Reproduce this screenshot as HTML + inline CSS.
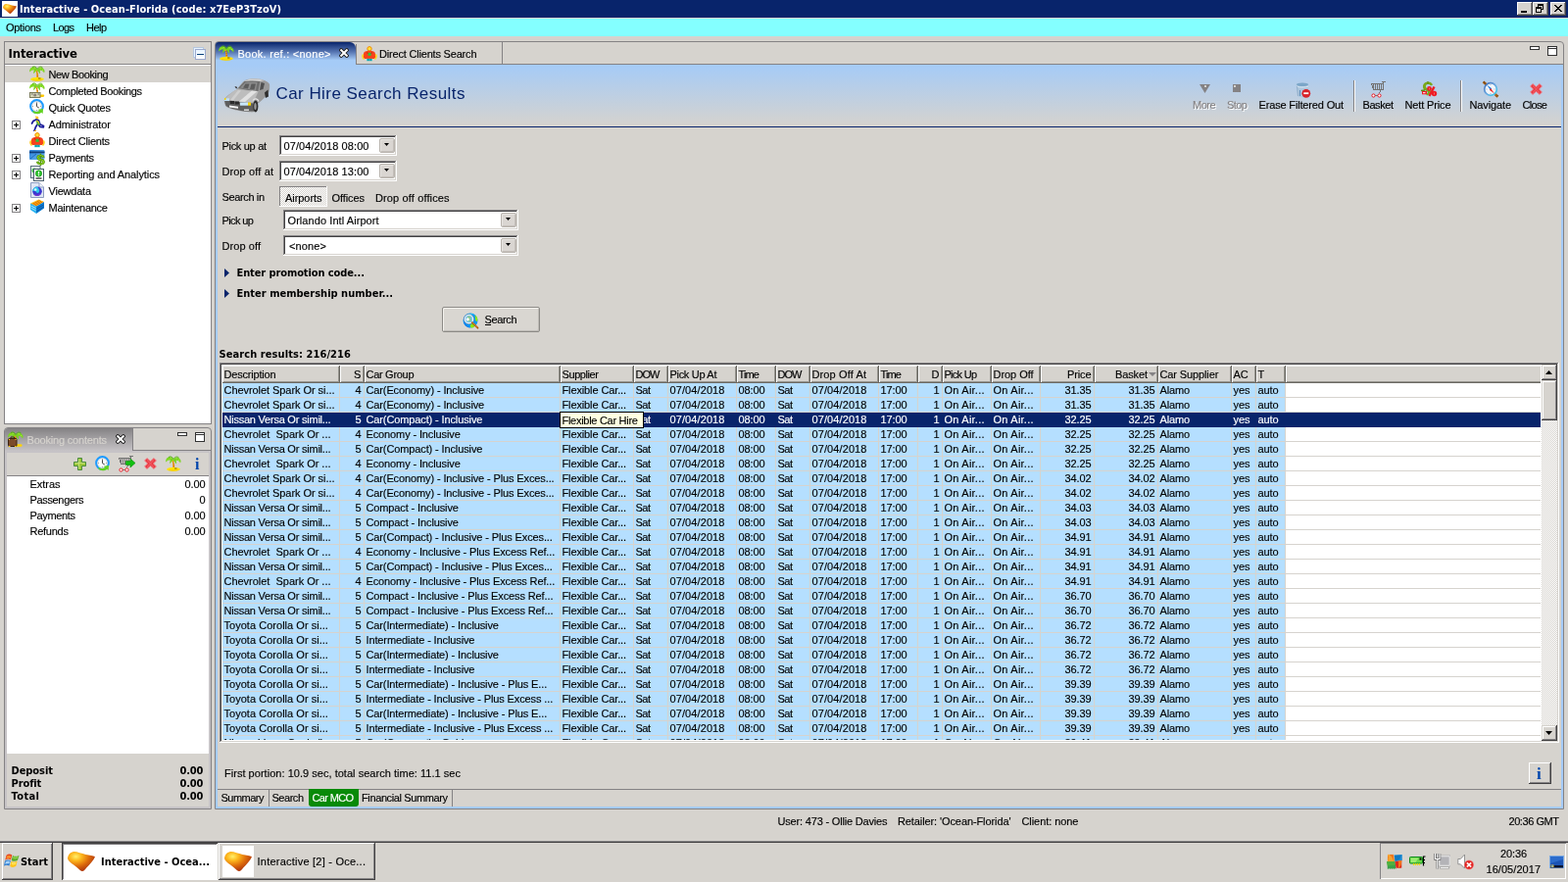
<!DOCTYPE html>
<html lang="en"><head><meta charset="utf-8"><title>Interactive - Ocean-Florida</title><style>html,body{margin:0;padding:0}body{width:1600px;height:900px;overflow:hidden;background:#D6D3CE;position:relative;font:11px/13px "Liberation Sans",sans-serif;color:#000}
#root{left:0;top:0;width:1600px;height:900px;will-change:transform}div,span,svg{position:absolute;display:block}span{white-space:pre}
.t{font:11px/13px "Liberation Sans",sans-serif;-webkit-text-stroke:.15px}.b{font:bold 11px/13px "DejaVu Sans Condensed","Liberation Sans",sans-serif}.h{font:bold 13px/15px "DejaVu Sans Condensed","Liberation Sans",sans-serif}.T{font:17px/20px "Liberation Sans",sans-serif}</style></head><body><div id="root">
<div style="left:0px;top:0px;width:1600px;height:18px;background:#08246B;"></div>
<div style="left:2px;top:1px;width:16px;height:16px;background:#fff;"></div>
<svg style="left:3px;top:4px" width="14" height="10" viewBox="0 0 28 20"><defs><radialGradient id="hg1" cx=".3" cy=".25" r=".85"><stop offset="0" stop-color="#fff06a"/><stop offset=".25" stop-color="#fdb81e"/><stop offset=".55" stop-color="#e0700c"/><stop offset=".85" stop-color="#b43c0c"/></radialGradient></defs><path d="M0 7C.5 3 3 .3 6.500 0c3.500 0 8 2 12 3 4 1 7.500 1.200 9.500 2.200-1.500 3.500-5 7.500-9 11.500-1.300 1.500-2.500 3.300-4 3.300s-3-1.500-4.500-3C7 13.500 1 11 0 7z" fill="url(#hg1)"/></svg>
<span class="b" style="left:20px;top:3px;letter-spacing:0.07px;color:#fff;">Interactive - Ocean-Florida (code: x7EeP3TzoV)</span>
<div style="left:1548px;top:2px;width:16px;height:14px;background:#D6D3CE;box-shadow:inset -1px -1px #424142,inset 1px 1px #fff,inset -2px -2px #848284,inset 2px 2px #D6D3CE;"></div>
<div style="left:1564px;top:2px;width:16px;height:14px;background:#D6D3CE;box-shadow:inset -1px -1px #424142,inset 1px 1px #fff,inset -2px -2px #848284,inset 2px 2px #D6D3CE;"></div>
<div style="left:1582px;top:2px;width:16px;height:14px;background:#D6D3CE;box-shadow:inset -1px -1px #424142,inset 1px 1px #fff,inset -2px -2px #848284,inset 2px 2px #D6D3CE;"></div>
<div style="left:1552px;top:11px;width:6px;height:2px;background:#000;"></div>
<div style="left:1569px;top:4px;width:6px;height:6px;border:1px solid #000;border-top-width:2px;box-sizing:border-box"></div>
<div style="left:1567px;top:7px;width:6px;height:6px;background:#D6D3CE;border:1px solid #000;border-top-width:2px;box-sizing:border-box"></div>
<svg style="left:1586px;top:5px" width="8" height="7" viewBox="0 0 8 7"><path d="M0 0l7 7M1 0l7 7M7 0L0 7M8 0L1 7" stroke="#000" stroke-width="1"/></svg>
<div style="left:0px;top:19px;width:1600px;height:18px;background:#84FFFF;"></div>
<span class="t" style="left:6px;top:22px;letter-spacing:-0.32px;">Options</span>
<span class="t" style="left:54px;top:22px;letter-spacing:-0.62px;">Logs</span>
<span class="t" style="left:88px;top:22px;letter-spacing:-0.54px;">Help</span>
<div style="left:4px;top:42px;width:212px;height:391px;border:1px solid #848284;box-sizing:border-box"></div>
<div style="left:5px;top:65px;width:210px;height:1px;background:#848284;"></div>
<div style="left:5px;top:66px;width:210px;height:366px;background:#fff;"></div>
<div style="left:5px;top:67px;width:210px;height:17px;background:#D6D3CE;"></div>
<span class="h" style="left:8.5px;top:47px;letter-spacing:-0.15px;">Interactive</span>
<div style="left:197px;top:48px;width:11px;height:11px;background:#E7F3FF;border:1px solid #B5C7DE;box-sizing:border-box"></div>
<div style="left:199px;top:50px;width:11px;height:11px;background:#fff;border:1px solid #9CAACE;box-sizing:border-box;background:linear-gradient(#E7F3FF,#fff)"></div>
<div style="left:201px;top:55px;width:7px;height:1px;background:#08417B;"></div>
<svg style="left:30px;top:67px" width="16" height="16" viewBox="0 0 16 16"><path d="M8 4.200C6.500 .8 3 .2 .8 3.200 0 4.500 0 5.800 .6 6.600 1.500 4.800 3.200 4.200 5 4.800 4.200 5.800 4 7.200 4.600 8.300 5.200 6.800 6.300 5.600 7.800 5.200 9.200 5.700 10 7 10.200 8.600 11.300 7.400 11.300 6 10.600 4.900 12.300 4.400 14 5.400 15 7.600 16 6 15.600 4.200 14.200 3 12.300 1.200 9.800 1 8 4.200z" fill="#79d41d"/><path d="M3 1.500C5 .3 6.800 1.200 8 3.500 9.500 1 11.800 .4 13.500 2" fill="none" stroke="#4fae0c" stroke-width=".9"/><path d="M2 4.500l1-1M4.500 3l1.200-.6M10.500 2.600l1.300.4M13 4l1 1.200M6.500 6l.8-.8" stroke="#b6f04a" stroke-width=".8"/><path d="M7.400 4.500C8.600 7 9.200 9.500 9.200 13h-1.900C7.500 10 7.400 7 6.600 5z" fill="#f4a300"/><path d="M7.300 6.500l1.200-.4M7.600 8.500l1.300-.3M7.600 10.500l1.500-.2" stroke="#b8400a" stroke-width=".7"/><path d="M1.200 14c0-1.100 3-1.900 6.800-1.900s6.800.8 6.800 1.700c0 1-2.400 1.900-6.400 1.900-4.500 0-7.200-.7-7.200-1.700z" fill="#ffe400"/><path d="M3 14.600c3 .7 7 .7 10.500-.2" stroke="#f2c200" stroke-width=".8" fill="none"/><path d="M9 13h2.500" stroke="#6b4a00" stroke-width=".8"/></svg>
<span class="t" style="left:49.5px;top:70px;letter-spacing:-0.38px;">New Booking</span>
<svg style="left:30px;top:84px" width="16" height="16" viewBox="0 0 16 16"><path d="M8 4.200C6.500 .8 3 .2 .8 3.200 0 4.500 0 5.800 .6 6.600 1.500 4.800 3.200 4.200 5 4.800 4.200 5.800 4 7.200 4.600 8.300 5.200 6.800 6.300 5.600 7.800 5.200 9.200 5.700 10 7 10.200 8.600 11.300 7.400 11.300 6 10.600 4.900 12.300 4.400 14 5.400 15 7.600 16 6 15.600 4.200 14.200 3 12.300 1.200 9.800 1 8 4.200z" fill="#79d41d"/><path d="M3 1.500C5 .3 6.800 1.200 8 3.500 9.500 1 11.800 .4 13.500 2" fill="none" stroke="#4fae0c" stroke-width=".9"/><path d="M2 4.500l1-1M4.500 3l1.200-.6M10.500 2.600l1.300.4M13 4l1 1.200M6.500 6l.8-.8" stroke="#b6f04a" stroke-width=".8"/><path d="M7.400 4.500C8.600 7 9.200 9.500 9.200 13h-1.900C7.500 10 7.400 7 6.600 5z" fill="#f4a300"/><path d="M7.300 6.500l1.200-.4M7.600 8.500l1.300-.3M7.600 10.500l1.500-.2" stroke="#b8400a" stroke-width=".7"/><path d="M11 12.500h3.500c1 0 1 2.500-.5 2.500h-3z" fill="#ffc800"/><rect x=".5" y="10.500" width="10.500" height="5" fill="#d6d6b8" stroke="#7b7b5a" stroke-width="1"/><circle cx="5.700" cy="13" r="1.600" fill="#8a8378"/><path d="M2 12h1.500M8.500 12H10" stroke="#555" stroke-width=".9"/></svg>
<span class="t" style="left:49.5px;top:87px;letter-spacing:-0.35px;">Completed Bookings</span>
<svg style="left:30px;top:101px" width="16" height="16" viewBox="0 0 16 16"><circle cx="7.500" cy="7.500" r="6.300" fill="#fff" stroke="#1e9bff" stroke-width="2.200"/><circle cx="7.500" cy="7.500" r="4.800" fill="#fdfdfd" stroke="#c9c9c9" stroke-width=".7"/><path d="M7.500 4.200v3.500l2.300 1.300" stroke="#444" stroke-width="1" fill="none"/><path d="M7.500 3v.8M12 7.500h-.8M3 7.500h.8M7.500 12v-.8" stroke="#777" stroke-width=".8"/><path d="M3.500 11.500c1.500 1.600 4.200 2 6.500 .8l-1-1.600 5 -.7-.3 5-1.500-1.300C9 16 5.500 15.500 3.500 13.500z" fill="#63d321"/></svg>
<span class="t" style="left:49.5px;top:104px;letter-spacing:-0.29px;">Quick Quotes</span>
<svg style="left:30px;top:118px" width="16" height="16" viewBox="0 0 16 16"><path d="M6 .5l3 .5 .5 2.500-2.500.5z" fill="#ffc21a"/><path d="M7 4l2.500 1 1.500 4 3.500 1.500M8.500 8.500l-2 3 -1.500 4M7 4L4 5.500 2.500 8M9 9l2 2.500 3.500.3" stroke="#1a1a9c" stroke-width="1.700" fill="none" stroke-linecap="round"/><path d="M6.500 4.500l3.500 1.200 1.200 3.800-3 .5z" fill="#4cab3c"/><path d="M7 5l2 .8.700 2.500" stroke="#ffc21a" stroke-width=".9" fill="none"/><path d="M5 15.500h2" stroke="#f4a300" stroke-width="1"/></svg>
<span class="t" style="left:49.5px;top:121px;letter-spacing:-0.11px;">Administrator</span>
<div style="left:12px;top:123px;width:9px;height:9px;background:#fff;border:1px solid #848284;box-sizing:border-box"></div>
<div style="left:14px;top:127px;width:5px;height:1px;background:#000;"></div>
<div style="left:16px;top:125px;width:1px;height:5px;background:#000;"></div>
<svg style="left:30px;top:135px" width="16" height="16" viewBox="0 0 16 16"><circle cx="8" cy="2.800" r="2.200" fill="#ffe23a" stroke="#f08a00" stroke-width="1"/><path d="M2 8.500C2 5.500 4.500 4.800 8 4.800s6 .7 6 3.700l1 3-2.200 1.500H3.200L1 11.500z" fill="#f8421a"/><path d="M1.700 8.500c-1 1.500-.8 3.500.8 5M14.300 8.500c1 1.500.8 3.500-.8 5" stroke="#ffd21a" stroke-width="1.600" fill="none"/><rect x="5.200" y="12.800" width="5.600" height="2.400" fill="#22c8c8"/><path d="M6.500 13v2M8 13v2M9.500 13v2" stroke="#0a7a9a" stroke-width=".6"/><rect x="6.500" y="6.800" width="3.200" height="3" fill="#2ec43a"/><path d="M5 6.500l1.500 1M11 6.500l-1.500 1" stroke="#b8200a" stroke-width=".8"/></svg>
<span class="t" style="left:49.5px;top:138px;letter-spacing:-0.22px;">Direct Clients</span>
<svg style="left:30px;top:152px" width="17" height="17" viewBox="0 0 17 17"><defs><linearGradient id="pg182" x1="0" x2="1" y1="0" y2="1"><stop offset="0" stop-color="#2a7fd8"/><stop offset="1" stop-color="#6ab6f0"/></linearGradient></defs><rect x="0" y="1" width="15.500" height="10" rx="1" fill="url(#pg182)"/><rect x="0" y="2.500" width="15.500" height="1.800" fill="#0f3c78"/><path d="M1 10l6-5" stroke="#1560b0" stroke-width=".8"/><text x="11.500" y="15.500" font-size="15" font-weight="bold" font-family="Liberation Sans,sans-serif" text-anchor="middle" fill="#8ed81c" stroke="#4d8c08" stroke-width=".7">$</text></svg>
<span class="t" style="left:49.5px;top:155px;letter-spacing:-0.35px;">Payments</span>
<div style="left:12px;top:157px;width:9px;height:9px;background:#fff;border:1px solid #848284;box-sizing:border-box"></div>
<div style="left:14px;top:161px;width:5px;height:1px;background:#000;"></div>
<div style="left:16px;top:159px;width:1px;height:5px;background:#000;"></div>
<svg style="left:30px;top:169px" width="16" height="16" viewBox="0 0 16 16"><rect x="1.500" y=".5" width="9.500" height="12" fill="#eef3f6" stroke="#5a6e7e"/><circle cx="5" cy="5" r="2.500" fill="#3cc43c"/><rect x="4.500" y="3.500" width="10" height="12" fill="#fff" stroke="#4a5e6e"/><circle cx="9.500" cy="8" r="3.200" fill="#2cc42c" stroke="#148a14" stroke-width=".6"/><path d="M9.500 6v2.500" stroke="#fff" stroke-width="1.200"/><circle cx="9.500" cy="9.800" r=".7" fill="#fff"/><path d="M6.500 13h6" stroke="#222" stroke-width="1.200"/></svg>
<span class="t" style="left:49.5px;top:172px;letter-spacing:-0.09px;">Reporting and Analytics</span>
<div style="left:12px;top:174px;width:9px;height:9px;background:#fff;border:1px solid #848284;box-sizing:border-box"></div>
<div style="left:14px;top:178px;width:5px;height:1px;background:#000;"></div>
<div style="left:16px;top:176px;width:1px;height:5px;background:#000;"></div>
<svg style="left:30px;top:186px" width="16" height="16" viewBox="0 0 16 16"><path d="M1.500 .5h8.500l4.500 4.500v10.500h-13z" fill="#dfe6f4" stroke="#8c9cc0"/><path d="M10 .5v4.500h4.500" fill="#f4f7fc" stroke="#8c9cc0"/><circle cx="8" cy="9.300" r="4.800" fill="#3a3ad0"/><path d="M8 4.500a4.800 4.800 0 0 0-4.800 4.800c1.500-1 3-.5 3.800.7 1 1.500 2.500 1 3-.5.400-1.500 0-3-2-5z" fill="#2ec8e8"/><circle cx="6.200" cy="7.500" r="1.300" fill="#d8f4ff"/><path d="M5 12.500c2 1.500 5 1 6.500-1" stroke="#8a2ad0" stroke-width="1" fill="none"/></svg>
<span class="t" style="left:49.5px;top:189px;letter-spacing:-0.22px;">Viewdata</span>
<svg style="left:30px;top:203px" width="16" height="16" viewBox="0 0 16 16"><path d="M1 4.500L9.500 .5 15 3 7 7.500z" fill="#ffc21a"/><path d="M2.500 5.500l8-4M4 6.300l8-4M5.500 7l8-4" stroke="#e06a00" stroke-width=".9"/><path d="M1 4.500l6 3V15L1 11z" fill="#2ab4f0"/><path d="M7 7.500L15 3v6.500L7 15z" fill="#0a7ad0"/><path d="M1.500 7l5 2.500M1.500 9.200l5 2.600" stroke="#bfeaff" stroke-width=".8"/><path d="M7.500 10l7-4M7.500 12.500l7-4.300" stroke="#0a4c9c" stroke-width=".8"/></svg>
<span class="t" style="left:49.5px;top:206px;letter-spacing:-0.25px;">Maintenance</span>
<div style="left:12px;top:208px;width:9px;height:9px;background:#fff;border:1px solid #848284;box-sizing:border-box"></div>
<div style="left:14px;top:212px;width:5px;height:1px;background:#000;"></div>
<div style="left:16px;top:210px;width:1px;height:5px;background:#000;"></div>
<div style="left:4px;top:436px;width:212px;height:390px;border:1px solid #848284;box-sizing:border-box;border-radius:4px 4px 0 0"></div>
<div style="left:5px;top:460px;width:210px;height:365px;border:2px solid #C6C3C6;border-top:0;box-sizing:border-box"></div>
<div style="left:5px;top:437px;width:131px;height:25px;background:linear-gradient(#848284,#C6C3C6 92%);border-radius:3px 0 0 0"></div>
<div style="left:136px;top:459px;width:79px;height:1px;background:#848284;"></div>
<div style="left:135px;top:438px;width:1px;height:22px;background:#848284;"></div>
<div style="left:136px;top:460px;width:79px;height:2px;background:#C6C3C6;"></div>
<svg style="left:8px;top:440px" width="16" height="16" viewBox="0 0 16 16"><path d="M8 4.200C6.500 .8 3 .2 .8 3.200 0 4.500 0 5.800 .6 6.600 1.500 4.800 3.200 4.200 5 4.800 4.200 5.800 4 7.200 4.600 8.300 5.200 6.800 6.300 5.600 7.800 5.200 9.200 5.700 10 7 10.200 8.600 11.300 7.400 11.300 6 10.600 4.900 12.300 4.400 14 5.400 15 7.600 16 6 15.600 4.200 14.200 3 12.300 1.200 9.800 1 8 4.200z" fill="#79d41d"/><path d="M3 1.500C5 .3 6.800 1.200 8 3.500 9.500 1 11.800 .4 13.500 2" fill="none" stroke="#4fae0c" stroke-width=".9"/><path d="M2 4.500l1-1M4.500 3l1.200-.6M10.500 2.600l1.300.4M13 4l1 1.200M6.500 6l.8-.8" stroke="#b6f04a" stroke-width=".8"/><path d="M7.400 4.500C8.600 7 9.200 9.500 9.200 13h-1.900C7.500 10 7.400 7 6.600 5z" fill="#f4a300"/><path d="M7.300 6.500l1.200-.4M7.600 8.500l1.300-.3M7.600 10.500l1.500-.2" stroke="#b8400a" stroke-width=".7"/><path d="M9 13.200h4.500c1.500 0 1.500 2.500 0 2.500H9z" fill="#ffd400"/><rect x=".5" y="7.500" width="8.500" height="8" rx="1" fill="#7b4b2a" stroke="#3d2412" stroke-width="1"/><path d="M3 7.500V6h3.500v1.500" fill="none" stroke="#3d2412" stroke-width="1"/><path d="M1 15.500h1.500M7 15.500h1.500M1 8.500h1M7.500 8.500h1" stroke="#ffd400" stroke-width="1"/></svg>
<span class="t" style="left:27.5px;top:443px;letter-spacing:-0.19px;color:#D6D3CE;">Booking contents</span>
<svg style="left:118px;top:443px" width="10" height="10" viewBox="0 0 10 10"><path d="M2.200 2.200l5.600 5.600M7.800 2.200l-5.600 5.600" stroke="#1c1c1c" stroke-width="3.800" stroke-linecap="square"/><path d="M2.200 2.200l5.600 5.600M7.800 2.200l-5.600 5.600" stroke="#fff" stroke-width="2" stroke-linecap="square"/></svg>
<div style="left:181px;top:441px;width:10px;height:4px;background:#fff;border:1px solid #333;box-sizing:border-box"></div>
<div style="left:199px;top:441px;width:10px;height:10px;background:#fff;border:1px solid #333;box-sizing:border-box"></div>
<div style="left:200px;top:443px;width:8px;height:1px;background:#333;"></div>
<svg style="left:75px;top:467px" width="13" height="13" viewBox="0 0 13 13"><path d="M4.500 .5h4v4h4v4h-4v4h-4v-4h-4v-4h4z" fill="#9dc83c" stroke="#4a8a3a"/><path d="M5.500 1.500v10M1.500 5.500h10" stroke="#c6e27a" stroke-width="1"/></svg>
<svg style="left:97px;top:465px" width="16" height="16" viewBox="0 0 16 16"><circle cx="7.500" cy="7.500" r="6.300" fill="#fff" stroke="#1e9bff" stroke-width="2.200"/><circle cx="7.500" cy="7.500" r="4.800" fill="#fdfdfd" stroke="#c9c9c9" stroke-width=".7"/><path d="M7.500 4.200v3.500l2.300 1.300" stroke="#444" stroke-width="1" fill="none"/><path d="M7.500 3v.8M12 7.500h-.8M3 7.500h.8M7.500 12v-.8" stroke="#777" stroke-width=".8"/><path d="M3.500 11.500c1.500 1.600 4.200 2 6.500 .8l-1-1.600 5 -.7-.3 5-1.500-1.300C9 16 5.500 15.500 3.500 13.500z" fill="#63d321"/></svg>
<svg style="left:121px;top:465px" width="17" height="17" viewBox="0 0 17 17"><g shape-rendering="crispEdges" stroke="#737373" fill="none"><path d="M0 2.500h13M11 .5h4M12.500 1v8M2 8.500h11M.5 3v1M1.500 4v3"/><path d="M2.500 3v5M4.500 3v5M6.500 3v5M8.500 3v5M10.500 3v5"/><path d="M9.500 9v2M8.500 11v1M4 14.500h3"/></g><circle cx="2.500" cy="14.500" r="1.600" fill="#fff" stroke="#e8101c" stroke-width="1"/><circle cx="8.500" cy="14.500" r="1.600" fill="#fff" stroke="#e8101c" stroke-width="1"/><path d="M7.500 5.500h4.500v-2.500l5 4.500-5 4.500V9.500H7.500z" fill="#10c010" stroke="#0a8a0a" stroke-width=".6"/></svg>
<svg style="left:147px;top:467px" width="13" height="12" viewBox="0 0 13 12"><path d="M3 .6L6.500 3.700 10 .6 12.400 3 9.400 6l3 3L10 11.400 6.500 8.300 3 11.400 .6 9l3-3-3-3z" fill="#e8353f" stroke="#f27c84" stroke-width=".9" stroke-linejoin="round"/><path d="M3 2.500l7 7M10 2.500l-7 7" stroke="#f0565e" stroke-width="1.200"/></svg>
<svg style="left:169px;top:465px" width="16" height="16" viewBox="0 0 16 16"><path d="M8 4.200C6.500 .8 3 .2 .8 3.200 0 4.500 0 5.800 .6 6.600 1.500 4.800 3.200 4.200 5 4.800 4.200 5.800 4 7.200 4.600 8.300 5.200 6.800 6.300 5.600 7.800 5.200 9.200 5.700 10 7 10.200 8.600 11.300 7.400 11.300 6 10.600 4.900 12.300 4.400 14 5.400 15 7.600 16 6 15.600 4.200 14.200 3 12.300 1.200 9.800 1 8 4.200z" fill="#79d41d"/><path d="M3 1.500C5 .3 6.800 1.200 8 3.500 9.500 1 11.800 .4 13.500 2" fill="none" stroke="#4fae0c" stroke-width=".9"/><path d="M2 4.500l1-1M4.500 3l1.200-.6M10.500 2.600l1.300.4M13 4l1 1.200M6.500 6l.8-.8" stroke="#b6f04a" stroke-width=".8"/><path d="M7.400 4.500C8.600 7 9.200 9.500 9.200 13h-1.900C7.500 10 7.400 7 6.600 5z" fill="#f4a300"/><path d="M7.300 6.500l1.200-.4M7.600 8.500l1.300-.3M7.600 10.500l1.500-.2" stroke="#b8400a" stroke-width=".7"/><path d="M1.200 14c0-1.100 3-1.900 6.800-1.900s6.800.8 6.800 1.700c0 1-2.400 1.900-6.400 1.900-4.500 0-7.200-.7-7.200-1.700z" fill="#ffe400"/><path d="M3 14.600c3 .7 7 .7 10.500-.2" stroke="#f2c200" stroke-width=".8" fill="none"/><path d="M9 13h2.500" stroke="#6b4a00" stroke-width=".8"/></svg>
<span style="left:199px;top:465px;font:bold 16px/18px 'Liberation Serif',serif;color:#0046ad">i</span>
<div style="left:7px;top:485px;width:206px;height:1px;background:#848284;"></div>
<div style="left:7px;top:486px;width:206px;height:283px;background:#fff;"></div>
<span class="t" style="left:30.5px;top:488px;letter-spacing:-0.04px;">Extras</span>
<span class="t" style="left:188.5px;top:488px;letter-spacing:-0.12px;">0.00</span>
<span class="t" style="left:30.5px;top:504px;letter-spacing:-0.34px;">Passengers</span>
<span class="t" style="left:203.5px;top:504px;">0</span>
<span class="t" style="left:30.5px;top:520px;letter-spacing:-0.35px;">Payments</span>
<span class="t" style="left:188.5px;top:520px;letter-spacing:-0.12px;">0.00</span>
<span class="t" style="left:30.5px;top:536px;letter-spacing:-0.25px;">Refunds</span>
<span class="t" style="left:188.5px;top:536px;letter-spacing:-0.12px;">0.00</span>
<span class="b" style="left:11.5px;top:780px;letter-spacing:-0.06px;">Deposit</span>
<span class="b" style="left:183.5px;top:780px;letter-spacing:-0.14px;">0.00</span>
<span class="b" style="left:11.5px;top:793px;letter-spacing:-0.1px;">Profit</span>
<span class="b" style="left:183.5px;top:793px;letter-spacing:-0.14px;">0.00</span>
<span class="b" style="left:11.5px;top:806px;letter-spacing:0.4px;">Total</span>
<span class="b" style="left:183.5px;top:806px;letter-spacing:-0.14px;">0.00</span>
<div style="left:219px;top:42px;width:1377px;height:784px;border:1px solid #848284;box-sizing:border-box;border-radius:4px 4px 0 0"></div>
<div style="left:220px;top:66px;width:1375px;height:759px;border:2px solid #A5CBF7;border-top:0;box-sizing:border-box"></div>
<div style="left:363px;top:65px;width:1232px;height:1px;background:#848284;"></div>
<div style="left:220px;top:43px;width:143px;height:23px;background:linear-gradient(#08246B 0,#5A79B5 45%,#A5CBF7 80%);border-radius:3px 6px 0 0"></div>
<svg style="left:223px;top:46px" width="16" height="16" viewBox="0 0 16 16"><path d="M8 4.200C6.500 .8 3 .2 .8 3.200 0 4.500 0 5.800 .6 6.600 1.500 4.800 3.200 4.200 5 4.800 4.200 5.800 4 7.200 4.600 8.300 5.200 6.800 6.300 5.600 7.800 5.200 9.200 5.700 10 7 10.200 8.600 11.300 7.400 11.300 6 10.600 4.900 12.300 4.400 14 5.400 15 7.600 16 6 15.600 4.200 14.200 3 12.300 1.200 9.800 1 8 4.200z" fill="#79d41d"/><path d="M3 1.500C5 .3 6.800 1.200 8 3.500 9.500 1 11.800 .4 13.500 2" fill="none" stroke="#4fae0c" stroke-width=".9"/><path d="M2 4.500l1-1M4.500 3l1.200-.6M10.500 2.600l1.300.4M13 4l1 1.200M6.500 6l.8-.8" stroke="#b6f04a" stroke-width=".8"/><path d="M7.400 4.500C8.600 7 9.200 9.500 9.200 13h-1.900C7.500 10 7.400 7 6.600 5z" fill="#f4a300"/><path d="M7.300 6.500l1.200-.4M7.600 8.500l1.300-.3M7.600 10.500l1.500-.2" stroke="#b8400a" stroke-width=".7"/><path d="M1.200 14c0-1.100 3-1.900 6.800-1.900s6.800.8 6.800 1.700c0 1-2.400 1.900-6.400 1.900-4.500 0-7.200-.7-7.200-1.700z" fill="#ffe400"/><path d="M3 14.600c3 .7 7 .7 10.500-.2" stroke="#f2c200" stroke-width=".8" fill="none"/><path d="M9 13h2.500" stroke="#6b4a00" stroke-width=".8"/></svg>
<span class="t" style="left:242.5px;top:49px;letter-spacing:0.26px;color:#fff;">Book. ref.: &lt;none&gt;</span>
<svg style="left:346px;top:49px" width="10" height="10" viewBox="0 0 10 10"><path d="M2.200 2.200l5.600 5.600M7.800 2.200l-5.600 5.600" stroke="#1c1c1c" stroke-width="3.800" stroke-linecap="square"/><path d="M2.200 2.200l5.600 5.600M7.800 2.200l-5.600 5.600" stroke="#fff" stroke-width="2" stroke-linecap="square"/></svg>
<div style="left:363px;top:45px;width:1px;height:20px;background:#848284;"></div>
<div style="left:512px;top:43px;width:1px;height:22px;background:#848284;"></div>
<svg style="left:369px;top:47px" width="16" height="16" viewBox="0 0 16 16"><circle cx="8" cy="2.800" r="2.200" fill="#ffe23a" stroke="#f08a00" stroke-width="1"/><path d="M2 8.500C2 5.500 4.500 4.800 8 4.800s6 .7 6 3.700l1 3-2.200 1.500H3.200L1 11.500z" fill="#f8421a"/><path d="M1.700 8.500c-1 1.500-.8 3.500.8 5M14.300 8.500c1 1.500.8 3.500-.8 5" stroke="#ffd21a" stroke-width="1.600" fill="none"/><rect x="5.200" y="12.800" width="5.600" height="2.400" fill="#22c8c8"/><path d="M6.500 13v2M8 13v2M9.500 13v2" stroke="#0a7a9a" stroke-width=".6"/><rect x="6.500" y="6.800" width="3.200" height="3" fill="#2ec43a"/><path d="M5 6.500l1.500 1M11 6.500l-1.500 1" stroke="#b8200a" stroke-width=".8"/></svg>
<span class="t" style="left:387px;top:49px;letter-spacing:-0.19px;">Direct Clients Search</span>
<div style="left:1561px;top:47px;width:10px;height:4px;background:#fff;border:1px solid #333;box-sizing:border-box"></div>
<div style="left:1579px;top:47px;width:10px;height:10px;background:#fff;border:1px solid #333;box-sizing:border-box"></div>
<div style="left:1580px;top:49px;width:8px;height:1px;background:#333;"></div>
<div style="left:222px;top:66px;width:1371px;height:63px;background:linear-gradient(#A5CBF7,#D6D3CE)"></div>
<div style="left:222px;top:129px;width:1371px;height:1px;background:#08246B;"></div>
<svg style="left:228px;top:80px" width="48" height="36" viewBox="0 0 48 36"><path d="M1 21c1-2 6-6 13-10 2-3 5-7 8-9 4-2 12-2 17-1 4 1 7 3 8 5 .5 3 0 7-1 9-2 3-8 9-13 12l-1 7c-2 1-9 0-13-.5C14 33 6 31 3 29 1 27 .5 24 1 21z" fill="#a4a4a4"/><path d="M27 .5h9l6 1.800-5 .7H21z" fill="#d0d0d0"/><path d="M15 10l6.500-7c5-.8 11-.8 16 0L35.500 13c-6-.6-13-1.500-20.500-3z" fill="#6e6e6e"/><path d="M17 9.500l5.500-5.500c4-.5 8-.5 12 0L33 12c-5-.5-10-1.200-16-2.500z" fill="#8c8c8c"/><path d="M22.500 5.500h4l-1.500 5-5-1zM28.500 5.500h4.500l-1.500 6-4.500-.6z" fill="#5c5c5c"/><path d="M38 3l4-.5c2.500 1 4.500 2.500 5 4l-1 7-3 5-9 8-2.500-2.500 4.500-11z" fill="#9a9a9a"/><path d="M38.500 4l3.500 1-1.500 6-3.500 1z" fill="#505050"/><path d="M2 20.500C5 17 9 13.500 14 11c7 1 14 1.800 21.500 2.200L30.500 24.500C21 24.500 10 23.500 2 20.500z" fill="#bdbdbd"/><path d="M16 23.500L29 12.500l5.500.5L22 24z" fill="#e2e2e2"/><path d="M7 22l8-10 3 .4-8 10z" fill="#cfcfcf"/><path d="M1 22.500l29.500 3 .5 8c-4 .3-10 0-13-.5C13 32 5 30 2.500 28z" fill="#5e5e5e"/><rect x="1" y="20.300" width="5" height="2.700" fill="#bfe0f8"/><rect x="1" y="20" width="1.500" height="2" fill="#f2d200"/><path d="M17 24.500h8v3.200h-8z" fill="#c8e6fa"/><rect x="25" y="24.500" width="3" height="3.200" fill="#f4d400"/><path d="M6.500 23h4.500v3H7zM11.500 23.500h4.500v3h-4z" fill="#2a2a2a"/><path d="M6 27.500l9 1.300v2L6 29.500z" fill="#f4f4f4"/><rect x="21" y="31.500" width="5" height="1.300" fill="#f0f0f0"/><ellipse cx="32.800" cy="28.500" rx="2.600" ry="6" fill="#2e2e2e"/><ellipse cx="32.500" cy="28.500" rx="1.200" ry="3.500" fill="#9a9a9a"/><path d="M30 22.500c2-2.500 5-2 6 1" stroke="#e8e8e8" stroke-width="1.200" fill="none"/><path d="M42 14.500l3.500-3 .5 7-3 1.500z" fill="#2e2e2e"/><path d="M11.500 8l2 .5 1 2-2-.5z" fill="#3a3a3a"/></svg>
<span class="T" style="left:281.5px;top:86px;letter-spacing:0.44px;color:#08246B;">Car Hire Search Results</span>
<svg style="left:1224px;top:86px" width="11" height="9" viewBox="0 0 11 9"><path d="M0 0h11L5.500 9z" fill="#848284"/><rect x="5" y="1" width="2" height="2" fill="#d6d3ce"/></svg>
<span class="t" style="left:1218px;top:102px;letter-spacing:-0.52px;color:#fff;">More</span>
<span class="t" style="left:1217px;top:101px;letter-spacing:-0.52px;color:#848284;">More</span>
<div style="left:1258px;top:86px;width:8px;height:8px;background:#848284;"></div>
<div style="left:1259px;top:87px;width:2px;height:2px;background:#D6D3CE;"></div>
<span class="t" style="left:1253px;top:102px;letter-spacing:-0.55px;color:#fff;">Stop</span>
<span class="t" style="left:1252px;top:101px;letter-spacing:-0.55px;color:#848284;">Stop</span>
<svg style="left:1322px;top:84px" width="16" height="16" viewBox="0 0 16 16"><path d="M.8 2.500c0-2.500 12.400-2.500 12.400 0L12 14c-1 1.500-9 1.500-10 0z" fill="#a9c4dc" fill-opacity=".75"/><ellipse cx="7" cy="2.200" rx="6" ry="1.700" fill="#7ba6c8"/><path d="M1 4c2 1.300 10 1.300 12 0" stroke="#d8e6f2" stroke-width="1" fill="none"/><path d="M4.500 8v6" stroke="#5c8cb8" stroke-width="1"/><path d="M1.500 4l1 10" stroke="#8aa8c4" stroke-width=".8"/><circle cx="10.800" cy="11.300" r="4.400" fill="#d8222a"/><rect x="8.300" y="10.300" width="5" height="1.800" fill="#fff"/></svg>
<span class="t" style="left:1284.5px;top:101px;letter-spacing:-0.16px;">Erase Filtered Out</span>
<div style="left:1381px;top:82px;width:1px;height:32px;background:#848284;"></div>
<div style="left:1382px;top:82px;width:1px;height:32px;background:#fff;"></div>
<svg style="left:1399px;top:83px" width="17" height="17" viewBox="0 0 17 17"><g shape-rendering="crispEdges" stroke="#737373" fill="none"><path d="M0 2.500h13M11 .5h4M12.500 1v8M2 8.500h11M.5 3v1M1.500 4v3"/><path d="M2.500 3v5M4.500 3v5M6.500 3v5M8.500 3v5M10.500 3v5"/><path d="M9.500 9v2M8.500 11v1M4 14.500h3"/></g><circle cx="2.500" cy="14.500" r="1.600" fill="#fff" stroke="#e8101c" stroke-width="1"/><circle cx="8.500" cy="14.500" r="1.600" fill="#fff" stroke="#e8101c" stroke-width="1"/></svg>
<span class="t" style="left:1390.5px;top:101px;letter-spacing:-0.43px;">Basket</span>
<svg style="left:1450px;top:83px" width="17" height="16" viewBox="0 0 17 16"><path d="M2 6C1.500 2.500 4.500 .3 7.500 .5c2.500.2 4 1.500 4.500 3l-2 1c-.8-1.500-2.500-2-4-1.300C4.500 4 4.500 6 6 7l3 1.500c1.500 1 1.500 3.500-.5 5l-2.500 1-1-2c1.500 0 2.500-1 1.500-2L4 9C2.500 8 2 7 2 6z" fill="#7aa81c"/><path d="M7 0v3" stroke="#5a8a10" stroke-width="1"/><path d="M0 9.500l4-.5" stroke="#5a8a10" stroke-width="1.300"/><rect x="1" y="10" width="5" height="3.300" fill="#ee1c24"/><rect x="2" y="11.200" width="2.500" height="1" fill="#fff"/><circle cx="8.500" cy="7.500" r="2.400" fill="#ee1c24"/><circle cx="13.500" cy="12.500" r="2.700" fill="#ee1c24"/><path d="M13.500 5.500L8.500 15" stroke="#ee1c24" stroke-width="2.400"/><path d="M8.500 6.500v2M13.500 11.500v2" stroke="#f8787c" stroke-width=".8"/></svg>
<span class="t" style="left:1433.5px;top:101px;letter-spacing:-0.14px;">Nett Price</span>
<div style="left:1490px;top:82px;width:1px;height:32px;background:#848284;"></div>
<div style="left:1491px;top:82px;width:1px;height:32px;background:#fff;"></div>
<svg style="left:1512px;top:82px" width="18" height="18" viewBox="0 0 18 18"><defs><linearGradient id="cg2" x1="0" x2="1" y1="0" y2="1"><stop offset="0" stop-color="#3c6cb8"/><stop offset=".5" stop-color="#6aa6e0"/><stop offset="1" stop-color="#3ad4f0"/></linearGradient></defs><path d="M1.500 1.500l3.500 3M13.500 14l3 2.800" stroke="#a8621a" stroke-width="2.600"/><path d="M2 1l1.500 2.500M15 16.500l1.200-1.200" stroke="#6a3c0c" stroke-width="1"/><circle cx="9" cy="9" r="6.300" fill="#f2f6fa" stroke="url(#cg2)" stroke-width="1.700"/><path d="M9 4v1M13.500 9h-1M4.500 9h1M9 14v-1" stroke="#9ab" stroke-width=".8"/><path d="M5 4.500l5.200 3.700-1.500 1.600z" fill="#1c7ce0"/><path d="M13 13.500L7.800 9.800l1.500-1.600z" fill="#f0201c"/></svg>
<span class="t" style="left:1499.5px;top:101px;letter-spacing:-0.13px;">Navigate</span>
<svg style="left:1561px;top:85px" width="13" height="12" viewBox="0 0 13 12"><path d="M3 .6L6.500 3.700 10 .6 12.400 3 9.400 6l3 3L10 11.400 6.500 8.300 3 11.400 .6 9l3-3-3-3z" fill="#e8353f" stroke="#f27c84" stroke-width=".9" stroke-linejoin="round"/><path d="M3 2.500l7 7M10 2.500l-7 7" stroke="#f0565e" stroke-width="1.200"/></svg>
<span class="t" style="left:1553.5px;top:101px;letter-spacing:-0.66px;">Close</span>
<span class="t" style="left:226.5px;top:143px;letter-spacing:-0.31px;">Pick up at</span>
<span class="t" style="left:226.5px;top:169px;letter-spacing:0.13px;">Drop off at</span>
<span class="t" style="left:226.5px;top:195px;letter-spacing:-0.37px;">Search in</span>
<span class="t" style="left:226.5px;top:219px;letter-spacing:-0.6px;">Pick up</span>
<span class="t" style="left:226.5px;top:245px;letter-spacing:0.08px;">Drop off</span>
<div style="left:285px;top:138px;width:120px;height:21px;background:#fff;box-shadow:inset -1px -1px #fff,inset 1px 1px #848284,inset -2px -2px #D6D3CE,inset 2px 2px #424142;"></div>
<div style="left:387px;top:141px;width:16px;height:15px;background:#DAD6D2;border:1px solid #B9B4AE;border-radius:2px;box-sizing:border-box;box-shadow:inset 1px 1px #E6E3E0,inset -1px -1px #C4BFBA"></div>
<svg style="left:392px;top:146px" width="5" height="3" viewBox="0 0 5 3"><path d="M0 0h5L2.500 3z" fill="#000"/></svg>
<span class="t" style="left:289.5px;top:143px;letter-spacing:0.09px;">07/04/2018 08:00</span>
<div style="left:285px;top:164px;width:120px;height:21px;background:#fff;box-shadow:inset -1px -1px #fff,inset 1px 1px #848284,inset -2px -2px #D6D3CE,inset 2px 2px #424142;"></div>
<div style="left:387px;top:167px;width:16px;height:15px;background:#DAD6D2;border:1px solid #B9B4AE;border-radius:2px;box-sizing:border-box;box-shadow:inset 1px 1px #E6E3E0,inset -1px -1px #C4BFBA"></div>
<svg style="left:392px;top:172px" width="5" height="3" viewBox="0 0 5 3"><path d="M0 0h5L2.500 3z" fill="#000"/></svg>
<span class="t" style="left:289.5px;top:169px;letter-spacing:0.09px;">07/04/2018 13:00</span>
<div style="left:289px;top:214px;width:240px;height:21px;background:#fff;box-shadow:inset -1px -1px #fff,inset 1px 1px #848284,inset -2px -2px #D6D3CE,inset 2px 2px #424142;"></div>
<div style="left:511px;top:217px;width:16px;height:15px;background:#DAD6D2;border:1px solid #B9B4AE;border-radius:2px;box-sizing:border-box;box-shadow:inset 1px 1px #E6E3E0,inset -1px -1px #C4BFBA"></div>
<svg style="left:516px;top:222px" width="5" height="3" viewBox="0 0 5 3"><path d="M0 0h5L2.500 3z" fill="#000"/></svg>
<span class="t" style="left:293.5px;top:219px;letter-spacing:0.07px;">Orlando Intl Airport</span>
<div style="left:289px;top:240px;width:240px;height:21px;background:#fff;box-shadow:inset -1px -1px #fff,inset 1px 1px #848284,inset -2px -2px #D6D3CE,inset 2px 2px #424142;"></div>
<div style="left:511px;top:243px;width:16px;height:15px;background:#DAD6D2;border:1px solid #B9B4AE;border-radius:2px;box-sizing:border-box;box-shadow:inset 1px 1px #E6E3E0,inset -1px -1px #C4BFBA"></div>
<svg style="left:516px;top:248px" width="5" height="3" viewBox="0 0 5 3"><path d="M0 0h5L2.500 3z" fill="#000"/></svg>
<span class="t" style="left:295px;top:245px;letter-spacing:0.13px;">&lt;none&gt;</span>
<div style="left:285px;top:190px;width:49px;height:21px;background:conic-gradient(#fff 25%,#D6D3CE 0 50%,#fff 0 75%,#D6D3CE 0) 0 0/2px 2px;box-shadow:inset -1px -1px #fff,inset 1px 1px #848284"></div>
<span class="t" style="left:291px;top:196px;letter-spacing:-0.06px;">Airports</span>
<span class="t" style="left:338.5px;top:196px;letter-spacing:-0.09px;">Offices</span>
<span class="t" style="left:383px;top:196px;letter-spacing:0.13px;">Drop off offices</span>
<svg style="left:229px;top:274px" width="5" height="9" viewBox="0 0 5 9"><path d="M0 0l5 4.500L0 9z" fill="#08246B"/></svg>
<span class="b" style="left:241.5px;top:272px;letter-spacing:-0.1px;">Enter promotion code...</span>
<svg style="left:229px;top:295px" width="5" height="9" viewBox="0 0 5 9"><path d="M0 0l5 4.500L0 9z" fill="#08246B"/></svg>
<span class="b" style="left:241.5px;top:293px;letter-spacing:0.01px;">Enter membership number...</span>
<div style="left:451px;top:313px;width:100px;height:26px;background:#D9D6D1;border:1px solid #8C8A86;border-radius:2px;box-sizing:border-box;box-shadow:inset 1px 1px #F4F2EE,inset -1px -1px #BDBAB5"></div>
<svg style="left:472px;top:319px" width="17" height="17" viewBox="0 0 17 17"><circle cx="8" cy="8" r="7.500" fill="#0a96f4"/><path d="M3 3.500C5 1 9 .3 12 2.500 9 2 5 3 3 3.500z" fill="#38dcf8"/><path d="M12.500 2.500c2.500 1.500 3.500 4.500 2.500 6.500-1.500 0-2.500-1.500-2-3.500zM8.500 12c1.500-1.500 4-1.500 4.500 0 .5 1.500-1.500 3.500-4 3.500-1.500-1-1.500-2.500-.5-3.500z" fill="#8ce80c"/><path d="M1 9c.5 3 3 6 7 6.500C5 14.500 2.500 12 1 9z" fill="#1c6ce0"/><circle cx="6.500" cy="6.700" r="4.300" fill="#7cc4f0" stroke="#fff" stroke-width="1.300"/><path d="M5 4c1.500-.7 3-.5 4 .5-1 .8-.8 2.500.3 3.500-1 1.200-2.500 1.500-4 1-1-1.500-1-3.500-.3-5z" fill="#8cc878" fill-opacity=".8"/><circle cx="5.300" cy="6.800" r="1.600" fill="#fff"/><circle cx="6.500" cy="6.700" r="5" fill="none" stroke="#6a6a8a" stroke-width=".5"/><path d="M9.800 10.200l5.700 5.500" stroke="#b05a0a" stroke-width="1.800" stroke-linecap="round"/><path d="M10 10l5 5" stroke="#e89a3a" stroke-width=".6"/></svg>
<span class="t" style="left:494.5px;top:320px;letter-spacing:-0.37px;">Search</span>
<div style="left:495px;top:331px;width:6px;height:1px;background:#000;"></div>
<span class="b" style="left:223.5px;top:355px;letter-spacing:0.08px;">Search results: 216/216</span>
<div style="left:224px;top:370px;width:1367px;height:388px;background:#fff;box-shadow:inset -1px -1px #fff,inset 1px 1px #848284,inset -2px -2px #D6D3CE,inset 2px 2px #424142;"></div>
<div style="left:227px;top:373px;width:120px;height:18px;background:#D6D3CE;box-shadow:inset -1px -1px #6B6963,inset 1px 1px #fff,inset -2px -2px #94928C;"></div>
<span class="t" style="left:228.5px;top:376px;letter-spacing:-0.2px;">Description</span>
<div style="left:347px;top:373px;width:25px;height:18px;background:#D6D3CE;box-shadow:inset -1px -1px #6B6963,inset 1px 1px #fff,inset -2px -2px #94928C;"></div>
<span class="t" style="left:361px;top:376px;">S</span>
<div style="left:372px;top:373px;width:200px;height:18px;background:#D6D3CE;box-shadow:inset -1px -1px #6B6963,inset 1px 1px #fff,inset -2px -2px #94928C;"></div>
<span class="t" style="left:373.5px;top:376px;letter-spacing:-0.29px;">Car Group</span>
<div style="left:572px;top:373px;width:75px;height:18px;background:#D6D3CE;box-shadow:inset -1px -1px #6B6963,inset 1px 1px #fff,inset -2px -2px #94928C;"></div>
<span class="t" style="left:573.5px;top:376px;letter-spacing:-0.41px;">Supplier</span>
<div style="left:647px;top:373px;width:35px;height:18px;background:#D6D3CE;box-shadow:inset -1px -1px #6B6963,inset 1px 1px #fff,inset -2px -2px #94928C;"></div>
<span class="t" style="left:648.5px;top:376px;letter-spacing:-0.95px;">DOW</span>
<div style="left:682px;top:373px;width:70px;height:18px;background:#D6D3CE;box-shadow:inset -1px -1px #6B6963,inset 1px 1px #fff,inset -2px -2px #94928C;"></div>
<span class="t" style="left:683.5px;top:376px;letter-spacing:-0.31px;">Pick Up At</span>
<div style="left:752px;top:373px;width:40px;height:18px;background:#D6D3CE;box-shadow:inset -1px -1px #6B6963,inset 1px 1px #fff,inset -2px -2px #94928C;"></div>
<span class="t" style="left:753.5px;top:376px;letter-spacing:-0.85px;">Time</span>
<div style="left:792px;top:373px;width:35px;height:18px;background:#D6D3CE;box-shadow:inset -1px -1px #6B6963,inset 1px 1px #fff,inset -2px -2px #94928C;"></div>
<span class="t" style="left:793.5px;top:376px;letter-spacing:-0.95px;">DOW</span>
<div style="left:827px;top:373px;width:70px;height:18px;background:#D6D3CE;box-shadow:inset -1px -1px #6B6963,inset 1px 1px #fff,inset -2px -2px #94928C;"></div>
<span class="t" style="left:828.5px;top:376px;letter-spacing:0.13px;">Drop Off At</span>
<div style="left:897px;top:373px;width:40px;height:18px;background:#D6D3CE;box-shadow:inset -1px -1px #6B6963,inset 1px 1px #fff,inset -2px -2px #94928C;"></div>
<span class="t" style="left:898.5px;top:376px;letter-spacing:-0.85px;">Time</span>
<div style="left:937px;top:373px;width:25px;height:18px;background:#D6D3CE;box-shadow:inset -1px -1px #6B6963,inset 1px 1px #fff,inset -2px -2px #94928C;"></div>
<span class="t" style="left:950.5px;top:376px;">D</span>
<div style="left:962px;top:373px;width:50px;height:18px;background:#D6D3CE;box-shadow:inset -1px -1px #6B6963,inset 1px 1px #fff,inset -2px -2px #94928C;"></div>
<span class="t" style="left:963.5px;top:376px;letter-spacing:-0.73px;">Pick Up</span>
<div style="left:1012px;top:373px;width:50px;height:18px;background:#D6D3CE;box-shadow:inset -1px -1px #6B6963,inset 1px 1px #fff,inset -2px -2px #94928C;"></div>
<span class="t" style="left:1013.5px;top:376px;letter-spacing:-0.05px;">Drop Off</span>
<div style="left:1062px;top:373px;width:55px;height:18px;background:#D6D3CE;box-shadow:inset -1px -1px #6B6963,inset 1px 1px #fff,inset -2px -2px #94928C;"></div>
<span class="t" style="left:1089px;top:376px;letter-spacing:-0.12px;">Price</span>
<div style="left:1117px;top:373px;width:65px;height:18px;background:#D6D3CE;box-shadow:inset -1px -1px #6B6963,inset 1px 1px #fff,inset -2px -2px #94928C;"></div>
<span class="t" style="left:1138px;top:376px;letter-spacing:-0.12px;">Basket</span>
<div style="left:1182px;top:373px;width:75px;height:18px;background:#D6D3CE;box-shadow:inset -1px -1px #6B6963,inset 1px 1px #fff,inset -2px -2px #94928C;"></div>
<span class="t" style="left:1183.5px;top:376px;letter-spacing:-0.12px;">Car Supplier</span>
<div style="left:1257px;top:373px;width:25px;height:18px;background:#D6D3CE;box-shadow:inset -1px -1px #6B6963,inset 1px 1px #fff,inset -2px -2px #94928C;"></div>
<span class="t" style="left:1258.5px;top:376px;letter-spacing:-0.12px;">AC</span>
<div style="left:1282px;top:373px;width:30px;height:18px;background:#D6D3CE;box-shadow:inset -1px -1px #6B6963,inset 1px 1px #fff,inset -2px -2px #94928C;"></div>
<span class="t" style="left:1283.5px;top:376px;">T</span>
<div style="left:1312px;top:373px;width:260px;height:18px;background:#D6D3CE;box-shadow:inset 0 -1px #6B6963,inset 1px 1px #fff,inset 0 -2px #94928C"></div>
<svg style="left:1172px;top:380px" width="8" height="4" viewBox="0 0 8 4"><path d="M0 0h8L4 4z" fill="#848284"/></svg>
<div style="left:227px;top:391px;width:1085px;height:364px;background:#B5DFFF;"></div>
<div style="left:227px;top:421px;width:1345px;height:15px;background:#08246B;"></div>
<div style="left:227px;top:391px;width:1345px;height:364px;overflow:hidden">
<div style="left:0;top:14px;width:1345px;height:1px;background:#D6D3CE"></div>
<div style="left:0;top:29px;width:1345px;height:1px;background:#D6D3CE"></div>
<div style="left:0;top:59px;width:1345px;height:1px;background:#D6D3CE"></div>
<div style="left:0;top:74px;width:1345px;height:1px;background:#D6D3CE"></div>
<div style="left:0;top:89px;width:1345px;height:1px;background:#D6D3CE"></div>
<div style="left:0;top:104px;width:1345px;height:1px;background:#D6D3CE"></div>
<div style="left:0;top:119px;width:1345px;height:1px;background:#D6D3CE"></div>
<div style="left:0;top:134px;width:1345px;height:1px;background:#D6D3CE"></div>
<div style="left:0;top:149px;width:1345px;height:1px;background:#D6D3CE"></div>
<div style="left:0;top:164px;width:1345px;height:1px;background:#D6D3CE"></div>
<div style="left:0;top:179px;width:1345px;height:1px;background:#D6D3CE"></div>
<div style="left:0;top:194px;width:1345px;height:1px;background:#D6D3CE"></div>
<div style="left:0;top:209px;width:1345px;height:1px;background:#D6D3CE"></div>
<div style="left:0;top:224px;width:1345px;height:1px;background:#D6D3CE"></div>
<div style="left:0;top:239px;width:1345px;height:1px;background:#D6D3CE"></div>
<div style="left:0;top:254px;width:1345px;height:1px;background:#D6D3CE"></div>
<div style="left:0;top:269px;width:1345px;height:1px;background:#D6D3CE"></div>
<div style="left:0;top:284px;width:1345px;height:1px;background:#D6D3CE"></div>
<div style="left:0;top:299px;width:1345px;height:1px;background:#D6D3CE"></div>
<div style="left:0;top:314px;width:1345px;height:1px;background:#D6D3CE"></div>
<div style="left:0;top:329px;width:1345px;height:1px;background:#D6D3CE"></div>
<div style="left:0;top:344px;width:1345px;height:1px;background:#D6D3CE"></div>
<div style="left:0;top:359px;width:1345px;height:1px;background:#D6D3CE"></div>
<div style="left:0;top:374px;width:1345px;height:1px;background:#D6D3CE"></div>
<div style="left:119px;top:0;width:1px;height:30px;background:#D6D3CE"></div>
<div style="left:119px;top:45px;width:1px;height:400px;background:#D6D3CE"></div>
<div style="left:144px;top:0;width:1px;height:30px;background:#D6D3CE"></div>
<div style="left:144px;top:45px;width:1px;height:400px;background:#D6D3CE"></div>
<div style="left:344px;top:0;width:1px;height:30px;background:#D6D3CE"></div>
<div style="left:344px;top:45px;width:1px;height:400px;background:#D6D3CE"></div>
<div style="left:419px;top:0;width:1px;height:30px;background:#D6D3CE"></div>
<div style="left:419px;top:45px;width:1px;height:400px;background:#D6D3CE"></div>
<div style="left:454px;top:0;width:1px;height:30px;background:#D6D3CE"></div>
<div style="left:454px;top:45px;width:1px;height:400px;background:#D6D3CE"></div>
<div style="left:524px;top:0;width:1px;height:30px;background:#D6D3CE"></div>
<div style="left:524px;top:45px;width:1px;height:400px;background:#D6D3CE"></div>
<div style="left:564px;top:0;width:1px;height:30px;background:#D6D3CE"></div>
<div style="left:564px;top:45px;width:1px;height:400px;background:#D6D3CE"></div>
<div style="left:599px;top:0;width:1px;height:30px;background:#D6D3CE"></div>
<div style="left:599px;top:45px;width:1px;height:400px;background:#D6D3CE"></div>
<div style="left:669px;top:0;width:1px;height:30px;background:#D6D3CE"></div>
<div style="left:669px;top:45px;width:1px;height:400px;background:#D6D3CE"></div>
<div style="left:709px;top:0;width:1px;height:30px;background:#D6D3CE"></div>
<div style="left:709px;top:45px;width:1px;height:400px;background:#D6D3CE"></div>
<div style="left:734px;top:0;width:1px;height:30px;background:#D6D3CE"></div>
<div style="left:734px;top:45px;width:1px;height:400px;background:#D6D3CE"></div>
<div style="left:784px;top:0;width:1px;height:30px;background:#D6D3CE"></div>
<div style="left:784px;top:45px;width:1px;height:400px;background:#D6D3CE"></div>
<div style="left:834px;top:0;width:1px;height:30px;background:#D6D3CE"></div>
<div style="left:834px;top:45px;width:1px;height:400px;background:#D6D3CE"></div>
<div style="left:889px;top:0;width:1px;height:30px;background:#D6D3CE"></div>
<div style="left:889px;top:45px;width:1px;height:400px;background:#D6D3CE"></div>
<div style="left:954px;top:0;width:1px;height:30px;background:#D6D3CE"></div>
<div style="left:954px;top:45px;width:1px;height:400px;background:#D6D3CE"></div>
<div style="left:1029px;top:0;width:1px;height:30px;background:#D6D3CE"></div>
<div style="left:1029px;top:45px;width:1px;height:400px;background:#D6D3CE"></div>
<div style="left:1054px;top:0;width:1px;height:30px;background:#D6D3CE"></div>
<div style="left:1054px;top:45px;width:1px;height:400px;background:#D6D3CE"></div>
<div style="left:1084px;top:0;width:1px;height:30px;background:#D6D3CE"></div>
<div style="left:1084px;top:45px;width:1px;height:400px;background:#D6D3CE"></div>
<span class="t" style="left:1.5px;top:1px;letter-spacing:-0.06px;">Chevrolet Spark Or si...</span>
<span class="t" style="left:135.5px;top:1px;">4</span>
<span class="t" style="left:146.5px;top:1px;letter-spacing:-0.12px;">Car(Economy) - Inclusive</span>
<span class="t" style="left:346.5px;top:1px;letter-spacing:-0.12px;">Flexible Car...</span>
<span class="t" style="left:421.5px;top:1px;letter-spacing:-0.51px;">Sat</span>
<span class="t" style="left:456.5px;top:1px;letter-spacing:0.1px;">07/04/2018</span>
<span class="t" style="left:526.5px;top:1px;letter-spacing:-0.13px;">08:00</span>
<span class="t" style="left:566.5px;top:1px;letter-spacing:-0.51px;">Sat</span>
<span class="t" style="left:601.5px;top:1px;letter-spacing:0.1px;">07/04/2018</span>
<span class="t" style="left:671.5px;top:1px;letter-spacing:-0.13px;">17:00</span>
<span class="t" style="left:725.5px;top:1px;">1</span>
<span class="t" style="left:736.5px;top:1px;letter-spacing:0.23px;">On Air...</span>
<span class="t" style="left:786.5px;top:1px;letter-spacing:0.23px;">On Air...</span>
<span class="t" style="left:859.5px;top:1px;letter-spacing:-0.13px;">31.35</span>
<span class="t" style="left:924.5px;top:1px;letter-spacing:-0.13px;">31.35</span>
<span class="t" style="left:956.5px;top:1px;letter-spacing:-0.12px;">Alamo</span>
<span class="t" style="left:1031.5px;top:1px;letter-spacing:-0.12px;">yes</span>
<span class="t" style="left:1056.5px;top:1px;letter-spacing:-0.12px;">auto</span>
<span class="t" style="left:1.5px;top:16px;letter-spacing:-0.06px;">Chevrolet Spark Or si...</span>
<span class="t" style="left:135.5px;top:16px;">4</span>
<span class="t" style="left:146.5px;top:16px;letter-spacing:-0.12px;">Car(Economy) - Inclusive</span>
<span class="t" style="left:346.5px;top:16px;letter-spacing:-0.12px;">Flexible Car...</span>
<span class="t" style="left:421.5px;top:16px;letter-spacing:-0.51px;">Sat</span>
<span class="t" style="left:456.5px;top:16px;letter-spacing:0.1px;">07/04/2018</span>
<span class="t" style="left:526.5px;top:16px;letter-spacing:-0.13px;">08:00</span>
<span class="t" style="left:566.5px;top:16px;letter-spacing:-0.51px;">Sat</span>
<span class="t" style="left:601.5px;top:16px;letter-spacing:0.1px;">07/04/2018</span>
<span class="t" style="left:671.5px;top:16px;letter-spacing:-0.13px;">17:00</span>
<span class="t" style="left:725.5px;top:16px;">1</span>
<span class="t" style="left:736.5px;top:16px;letter-spacing:0.23px;">On Air...</span>
<span class="t" style="left:786.5px;top:16px;letter-spacing:0.23px;">On Air...</span>
<span class="t" style="left:859.5px;top:16px;letter-spacing:-0.13px;">31.35</span>
<span class="t" style="left:924.5px;top:16px;letter-spacing:-0.13px;">31.35</span>
<span class="t" style="left:956.5px;top:16px;letter-spacing:-0.12px;">Alamo</span>
<span class="t" style="left:1031.5px;top:16px;letter-spacing:-0.12px;">yes</span>
<span class="t" style="left:1056.5px;top:16px;letter-spacing:-0.12px;">auto</span>
<span class="t" style="left:1.5px;top:31px;letter-spacing:-0.23px;color:#fff;">Nissan Versa Or simil...</span>
<span class="t" style="left:135.5px;top:31px;color:#fff;">5</span>
<span class="t" style="left:146.5px;top:31px;letter-spacing:-0.12px;color:#fff;">Car(Compact) - Inclusive</span>
<span class="t" style="left:346.5px;top:31px;letter-spacing:-0.12px;color:#fff;">Flexible Car...</span>
<span class="t" style="left:421.5px;top:31px;letter-spacing:-0.51px;color:#fff;">Sat</span>
<span class="t" style="left:456.5px;top:31px;letter-spacing:0.1px;color:#fff;">07/04/2018</span>
<span class="t" style="left:526.5px;top:31px;letter-spacing:-0.13px;color:#fff;">08:00</span>
<span class="t" style="left:566.5px;top:31px;letter-spacing:-0.51px;color:#fff;">Sat</span>
<span class="t" style="left:601.5px;top:31px;letter-spacing:0.1px;color:#fff;">07/04/2018</span>
<span class="t" style="left:671.5px;top:31px;letter-spacing:-0.13px;color:#fff;">17:00</span>
<span class="t" style="left:725.5px;top:31px;color:#fff;">1</span>
<span class="t" style="left:736.5px;top:31px;letter-spacing:0.23px;color:#fff;">On Air...</span>
<span class="t" style="left:786.5px;top:31px;letter-spacing:0.23px;color:#fff;">On Air...</span>
<span class="t" style="left:859.5px;top:31px;letter-spacing:-0.13px;color:#fff;">32.25</span>
<span class="t" style="left:924.5px;top:31px;letter-spacing:-0.13px;color:#fff;">32.25</span>
<span class="t" style="left:956.5px;top:31px;letter-spacing:-0.12px;color:#fff;">Alamo</span>
<span class="t" style="left:1031.5px;top:31px;letter-spacing:-0.12px;color:#fff;">yes</span>
<span class="t" style="left:1056.5px;top:31px;letter-spacing:-0.12px;color:#fff;">auto</span>
<span class="t" style="left:1.5px;top:46px;letter-spacing:-0.02px;">Chevrolet  Spark Or ...</span>
<span class="t" style="left:135.5px;top:46px;">4</span>
<span class="t" style="left:146.5px;top:46px;letter-spacing:-0.12px;">Economy - Inclusive</span>
<span class="t" style="left:346.5px;top:46px;letter-spacing:-0.12px;">Flexible Car...</span>
<span class="t" style="left:421.5px;top:46px;letter-spacing:-0.51px;">Sat</span>
<span class="t" style="left:456.5px;top:46px;letter-spacing:0.1px;">07/04/2018</span>
<span class="t" style="left:526.5px;top:46px;letter-spacing:-0.13px;">08:00</span>
<span class="t" style="left:566.5px;top:46px;letter-spacing:-0.51px;">Sat</span>
<span class="t" style="left:601.5px;top:46px;letter-spacing:0.1px;">07/04/2018</span>
<span class="t" style="left:671.5px;top:46px;letter-spacing:-0.13px;">17:00</span>
<span class="t" style="left:725.5px;top:46px;">1</span>
<span class="t" style="left:736.5px;top:46px;letter-spacing:0.23px;">On Air...</span>
<span class="t" style="left:786.5px;top:46px;letter-spacing:0.23px;">On Air...</span>
<span class="t" style="left:859.5px;top:46px;letter-spacing:-0.13px;">32.25</span>
<span class="t" style="left:924.5px;top:46px;letter-spacing:-0.13px;">32.25</span>
<span class="t" style="left:956.5px;top:46px;letter-spacing:-0.12px;">Alamo</span>
<span class="t" style="left:1031.5px;top:46px;letter-spacing:-0.12px;">yes</span>
<span class="t" style="left:1056.5px;top:46px;letter-spacing:-0.12px;">auto</span>
<span class="t" style="left:1.5px;top:61px;letter-spacing:-0.23px;">Nissan Versa Or simil...</span>
<span class="t" style="left:135.5px;top:61px;">5</span>
<span class="t" style="left:146.5px;top:61px;letter-spacing:-0.12px;">Car(Compact) - Inclusive</span>
<span class="t" style="left:346.5px;top:61px;letter-spacing:-0.12px;">Flexible Car...</span>
<span class="t" style="left:421.5px;top:61px;letter-spacing:-0.51px;">Sat</span>
<span class="t" style="left:456.5px;top:61px;letter-spacing:0.1px;">07/04/2018</span>
<span class="t" style="left:526.5px;top:61px;letter-spacing:-0.13px;">08:00</span>
<span class="t" style="left:566.5px;top:61px;letter-spacing:-0.51px;">Sat</span>
<span class="t" style="left:601.5px;top:61px;letter-spacing:0.1px;">07/04/2018</span>
<span class="t" style="left:671.5px;top:61px;letter-spacing:-0.13px;">17:00</span>
<span class="t" style="left:725.5px;top:61px;">1</span>
<span class="t" style="left:736.5px;top:61px;letter-spacing:0.23px;">On Air...</span>
<span class="t" style="left:786.5px;top:61px;letter-spacing:0.23px;">On Air...</span>
<span class="t" style="left:859.5px;top:61px;letter-spacing:-0.13px;">32.25</span>
<span class="t" style="left:924.5px;top:61px;letter-spacing:-0.13px;">32.25</span>
<span class="t" style="left:956.5px;top:61px;letter-spacing:-0.12px;">Alamo</span>
<span class="t" style="left:1031.5px;top:61px;letter-spacing:-0.12px;">yes</span>
<span class="t" style="left:1056.5px;top:61px;letter-spacing:-0.12px;">auto</span>
<span class="t" style="left:1.5px;top:76px;letter-spacing:-0.02px;">Chevrolet  Spark Or ...</span>
<span class="t" style="left:135.5px;top:76px;">4</span>
<span class="t" style="left:146.5px;top:76px;letter-spacing:-0.12px;">Economy - Inclusive</span>
<span class="t" style="left:346.5px;top:76px;letter-spacing:-0.12px;">Flexible Car...</span>
<span class="t" style="left:421.5px;top:76px;letter-spacing:-0.51px;">Sat</span>
<span class="t" style="left:456.5px;top:76px;letter-spacing:0.1px;">07/04/2018</span>
<span class="t" style="left:526.5px;top:76px;letter-spacing:-0.13px;">08:00</span>
<span class="t" style="left:566.5px;top:76px;letter-spacing:-0.51px;">Sat</span>
<span class="t" style="left:601.5px;top:76px;letter-spacing:0.1px;">07/04/2018</span>
<span class="t" style="left:671.5px;top:76px;letter-spacing:-0.13px;">17:00</span>
<span class="t" style="left:725.5px;top:76px;">1</span>
<span class="t" style="left:736.5px;top:76px;letter-spacing:0.23px;">On Air...</span>
<span class="t" style="left:786.5px;top:76px;letter-spacing:0.23px;">On Air...</span>
<span class="t" style="left:859.5px;top:76px;letter-spacing:-0.13px;">32.25</span>
<span class="t" style="left:924.5px;top:76px;letter-spacing:-0.13px;">32.25</span>
<span class="t" style="left:956.5px;top:76px;letter-spacing:-0.12px;">Alamo</span>
<span class="t" style="left:1031.5px;top:76px;letter-spacing:-0.12px;">yes</span>
<span class="t" style="left:1056.5px;top:76px;letter-spacing:-0.12px;">auto</span>
<span class="t" style="left:1.5px;top:91px;letter-spacing:-0.06px;">Chevrolet Spark Or si...</span>
<span class="t" style="left:135.5px;top:91px;">4</span>
<span class="t" style="left:146.5px;top:91px;letter-spacing:-0.12px;">Car(Economy) - Inclusive - Plus Exces...</span>
<span class="t" style="left:346.5px;top:91px;letter-spacing:-0.12px;">Flexible Car...</span>
<span class="t" style="left:421.5px;top:91px;letter-spacing:-0.51px;">Sat</span>
<span class="t" style="left:456.5px;top:91px;letter-spacing:0.1px;">07/04/2018</span>
<span class="t" style="left:526.5px;top:91px;letter-spacing:-0.13px;">08:00</span>
<span class="t" style="left:566.5px;top:91px;letter-spacing:-0.51px;">Sat</span>
<span class="t" style="left:601.5px;top:91px;letter-spacing:0.1px;">07/04/2018</span>
<span class="t" style="left:671.5px;top:91px;letter-spacing:-0.13px;">17:00</span>
<span class="t" style="left:725.5px;top:91px;">1</span>
<span class="t" style="left:736.5px;top:91px;letter-spacing:0.23px;">On Air...</span>
<span class="t" style="left:786.5px;top:91px;letter-spacing:0.23px;">On Air...</span>
<span class="t" style="left:859.5px;top:91px;letter-spacing:-0.13px;">34.02</span>
<span class="t" style="left:924.5px;top:91px;letter-spacing:-0.13px;">34.02</span>
<span class="t" style="left:956.5px;top:91px;letter-spacing:-0.12px;">Alamo</span>
<span class="t" style="left:1031.5px;top:91px;letter-spacing:-0.12px;">yes</span>
<span class="t" style="left:1056.5px;top:91px;letter-spacing:-0.12px;">auto</span>
<span class="t" style="left:1.5px;top:106px;letter-spacing:-0.06px;">Chevrolet Spark Or si...</span>
<span class="t" style="left:135.5px;top:106px;">4</span>
<span class="t" style="left:146.5px;top:106px;letter-spacing:-0.12px;">Car(Economy) - Inclusive - Plus Exces...</span>
<span class="t" style="left:346.5px;top:106px;letter-spacing:-0.12px;">Flexible Car...</span>
<span class="t" style="left:421.5px;top:106px;letter-spacing:-0.51px;">Sat</span>
<span class="t" style="left:456.5px;top:106px;letter-spacing:0.1px;">07/04/2018</span>
<span class="t" style="left:526.5px;top:106px;letter-spacing:-0.13px;">08:00</span>
<span class="t" style="left:566.5px;top:106px;letter-spacing:-0.51px;">Sat</span>
<span class="t" style="left:601.5px;top:106px;letter-spacing:0.1px;">07/04/2018</span>
<span class="t" style="left:671.5px;top:106px;letter-spacing:-0.13px;">17:00</span>
<span class="t" style="left:725.5px;top:106px;">1</span>
<span class="t" style="left:736.5px;top:106px;letter-spacing:0.23px;">On Air...</span>
<span class="t" style="left:786.5px;top:106px;letter-spacing:0.23px;">On Air...</span>
<span class="t" style="left:859.5px;top:106px;letter-spacing:-0.13px;">34.02</span>
<span class="t" style="left:924.5px;top:106px;letter-spacing:-0.13px;">34.02</span>
<span class="t" style="left:956.5px;top:106px;letter-spacing:-0.12px;">Alamo</span>
<span class="t" style="left:1031.5px;top:106px;letter-spacing:-0.12px;">yes</span>
<span class="t" style="left:1056.5px;top:106px;letter-spacing:-0.12px;">auto</span>
<span class="t" style="left:1.5px;top:121px;letter-spacing:-0.23px;">Nissan Versa Or simil...</span>
<span class="t" style="left:135.5px;top:121px;">5</span>
<span class="t" style="left:146.5px;top:121px;letter-spacing:-0.12px;">Compact - Inclusive</span>
<span class="t" style="left:346.5px;top:121px;letter-spacing:-0.12px;">Flexible Car...</span>
<span class="t" style="left:421.5px;top:121px;letter-spacing:-0.51px;">Sat</span>
<span class="t" style="left:456.5px;top:121px;letter-spacing:0.1px;">07/04/2018</span>
<span class="t" style="left:526.5px;top:121px;letter-spacing:-0.13px;">08:00</span>
<span class="t" style="left:566.5px;top:121px;letter-spacing:-0.51px;">Sat</span>
<span class="t" style="left:601.5px;top:121px;letter-spacing:0.1px;">07/04/2018</span>
<span class="t" style="left:671.5px;top:121px;letter-spacing:-0.13px;">17:00</span>
<span class="t" style="left:725.5px;top:121px;">1</span>
<span class="t" style="left:736.5px;top:121px;letter-spacing:0.23px;">On Air...</span>
<span class="t" style="left:786.5px;top:121px;letter-spacing:0.23px;">On Air...</span>
<span class="t" style="left:859.5px;top:121px;letter-spacing:-0.13px;">34.03</span>
<span class="t" style="left:924.5px;top:121px;letter-spacing:-0.13px;">34.03</span>
<span class="t" style="left:956.5px;top:121px;letter-spacing:-0.12px;">Alamo</span>
<span class="t" style="left:1031.5px;top:121px;letter-spacing:-0.12px;">yes</span>
<span class="t" style="left:1056.5px;top:121px;letter-spacing:-0.12px;">auto</span>
<span class="t" style="left:1.5px;top:136px;letter-spacing:-0.23px;">Nissan Versa Or simil...</span>
<span class="t" style="left:135.5px;top:136px;">5</span>
<span class="t" style="left:146.5px;top:136px;letter-spacing:-0.12px;">Compact - Inclusive</span>
<span class="t" style="left:346.5px;top:136px;letter-spacing:-0.12px;">Flexible Car...</span>
<span class="t" style="left:421.5px;top:136px;letter-spacing:-0.51px;">Sat</span>
<span class="t" style="left:456.5px;top:136px;letter-spacing:0.1px;">07/04/2018</span>
<span class="t" style="left:526.5px;top:136px;letter-spacing:-0.13px;">08:00</span>
<span class="t" style="left:566.5px;top:136px;letter-spacing:-0.51px;">Sat</span>
<span class="t" style="left:601.5px;top:136px;letter-spacing:0.1px;">07/04/2018</span>
<span class="t" style="left:671.5px;top:136px;letter-spacing:-0.13px;">17:00</span>
<span class="t" style="left:725.5px;top:136px;">1</span>
<span class="t" style="left:736.5px;top:136px;letter-spacing:0.23px;">On Air...</span>
<span class="t" style="left:786.5px;top:136px;letter-spacing:0.23px;">On Air...</span>
<span class="t" style="left:859.5px;top:136px;letter-spacing:-0.13px;">34.03</span>
<span class="t" style="left:924.5px;top:136px;letter-spacing:-0.13px;">34.03</span>
<span class="t" style="left:956.5px;top:136px;letter-spacing:-0.12px;">Alamo</span>
<span class="t" style="left:1031.5px;top:136px;letter-spacing:-0.12px;">yes</span>
<span class="t" style="left:1056.5px;top:136px;letter-spacing:-0.12px;">auto</span>
<span class="t" style="left:1.5px;top:151px;letter-spacing:-0.23px;">Nissan Versa Or simil...</span>
<span class="t" style="left:135.5px;top:151px;">5</span>
<span class="t" style="left:146.5px;top:151px;letter-spacing:-0.12px;">Car(Compact) - Inclusive - Plus Exces...</span>
<span class="t" style="left:346.5px;top:151px;letter-spacing:-0.12px;">Flexible Car...</span>
<span class="t" style="left:421.5px;top:151px;letter-spacing:-0.51px;">Sat</span>
<span class="t" style="left:456.5px;top:151px;letter-spacing:0.1px;">07/04/2018</span>
<span class="t" style="left:526.5px;top:151px;letter-spacing:-0.13px;">08:00</span>
<span class="t" style="left:566.5px;top:151px;letter-spacing:-0.51px;">Sat</span>
<span class="t" style="left:601.5px;top:151px;letter-spacing:0.1px;">07/04/2018</span>
<span class="t" style="left:671.5px;top:151px;letter-spacing:-0.13px;">17:00</span>
<span class="t" style="left:725.5px;top:151px;">1</span>
<span class="t" style="left:736.5px;top:151px;letter-spacing:0.23px;">On Air...</span>
<span class="t" style="left:786.5px;top:151px;letter-spacing:0.23px;">On Air...</span>
<span class="t" style="left:859.5px;top:151px;letter-spacing:-0.13px;">34.91</span>
<span class="t" style="left:924.5px;top:151px;letter-spacing:-0.13px;">34.91</span>
<span class="t" style="left:956.5px;top:151px;letter-spacing:-0.12px;">Alamo</span>
<span class="t" style="left:1031.5px;top:151px;letter-spacing:-0.12px;">yes</span>
<span class="t" style="left:1056.5px;top:151px;letter-spacing:-0.12px;">auto</span>
<span class="t" style="left:1.5px;top:166px;letter-spacing:-0.02px;">Chevrolet  Spark Or ...</span>
<span class="t" style="left:135.5px;top:166px;">4</span>
<span class="t" style="left:146.5px;top:166px;letter-spacing:-0.12px;">Economy - Inclusive - Plus Excess Ref...</span>
<span class="t" style="left:346.5px;top:166px;letter-spacing:-0.12px;">Flexible Car...</span>
<span class="t" style="left:421.5px;top:166px;letter-spacing:-0.51px;">Sat</span>
<span class="t" style="left:456.5px;top:166px;letter-spacing:0.1px;">07/04/2018</span>
<span class="t" style="left:526.5px;top:166px;letter-spacing:-0.13px;">08:00</span>
<span class="t" style="left:566.5px;top:166px;letter-spacing:-0.51px;">Sat</span>
<span class="t" style="left:601.5px;top:166px;letter-spacing:0.1px;">07/04/2018</span>
<span class="t" style="left:671.5px;top:166px;letter-spacing:-0.13px;">17:00</span>
<span class="t" style="left:725.5px;top:166px;">1</span>
<span class="t" style="left:736.5px;top:166px;letter-spacing:0.23px;">On Air...</span>
<span class="t" style="left:786.5px;top:166px;letter-spacing:0.23px;">On Air...</span>
<span class="t" style="left:859.5px;top:166px;letter-spacing:-0.13px;">34.91</span>
<span class="t" style="left:924.5px;top:166px;letter-spacing:-0.13px;">34.91</span>
<span class="t" style="left:956.5px;top:166px;letter-spacing:-0.12px;">Alamo</span>
<span class="t" style="left:1031.5px;top:166px;letter-spacing:-0.12px;">yes</span>
<span class="t" style="left:1056.5px;top:166px;letter-spacing:-0.12px;">auto</span>
<span class="t" style="left:1.5px;top:181px;letter-spacing:-0.23px;">Nissan Versa Or simil...</span>
<span class="t" style="left:135.5px;top:181px;">5</span>
<span class="t" style="left:146.5px;top:181px;letter-spacing:-0.12px;">Car(Compact) - Inclusive - Plus Exces...</span>
<span class="t" style="left:346.5px;top:181px;letter-spacing:-0.12px;">Flexible Car...</span>
<span class="t" style="left:421.5px;top:181px;letter-spacing:-0.51px;">Sat</span>
<span class="t" style="left:456.5px;top:181px;letter-spacing:0.1px;">07/04/2018</span>
<span class="t" style="left:526.5px;top:181px;letter-spacing:-0.13px;">08:00</span>
<span class="t" style="left:566.5px;top:181px;letter-spacing:-0.51px;">Sat</span>
<span class="t" style="left:601.5px;top:181px;letter-spacing:0.1px;">07/04/2018</span>
<span class="t" style="left:671.5px;top:181px;letter-spacing:-0.13px;">17:00</span>
<span class="t" style="left:725.5px;top:181px;">1</span>
<span class="t" style="left:736.5px;top:181px;letter-spacing:0.23px;">On Air...</span>
<span class="t" style="left:786.5px;top:181px;letter-spacing:0.23px;">On Air...</span>
<span class="t" style="left:859.5px;top:181px;letter-spacing:-0.13px;">34.91</span>
<span class="t" style="left:924.5px;top:181px;letter-spacing:-0.13px;">34.91</span>
<span class="t" style="left:956.5px;top:181px;letter-spacing:-0.12px;">Alamo</span>
<span class="t" style="left:1031.5px;top:181px;letter-spacing:-0.12px;">yes</span>
<span class="t" style="left:1056.5px;top:181px;letter-spacing:-0.12px;">auto</span>
<span class="t" style="left:1.5px;top:196px;letter-spacing:-0.02px;">Chevrolet  Spark Or ...</span>
<span class="t" style="left:135.5px;top:196px;">4</span>
<span class="t" style="left:146.5px;top:196px;letter-spacing:-0.12px;">Economy - Inclusive - Plus Excess Ref...</span>
<span class="t" style="left:346.5px;top:196px;letter-spacing:-0.12px;">Flexible Car...</span>
<span class="t" style="left:421.5px;top:196px;letter-spacing:-0.51px;">Sat</span>
<span class="t" style="left:456.5px;top:196px;letter-spacing:0.1px;">07/04/2018</span>
<span class="t" style="left:526.5px;top:196px;letter-spacing:-0.13px;">08:00</span>
<span class="t" style="left:566.5px;top:196px;letter-spacing:-0.51px;">Sat</span>
<span class="t" style="left:601.5px;top:196px;letter-spacing:0.1px;">07/04/2018</span>
<span class="t" style="left:671.5px;top:196px;letter-spacing:-0.13px;">17:00</span>
<span class="t" style="left:725.5px;top:196px;">1</span>
<span class="t" style="left:736.5px;top:196px;letter-spacing:0.23px;">On Air...</span>
<span class="t" style="left:786.5px;top:196px;letter-spacing:0.23px;">On Air...</span>
<span class="t" style="left:859.5px;top:196px;letter-spacing:-0.13px;">34.91</span>
<span class="t" style="left:924.5px;top:196px;letter-spacing:-0.13px;">34.91</span>
<span class="t" style="left:956.5px;top:196px;letter-spacing:-0.12px;">Alamo</span>
<span class="t" style="left:1031.5px;top:196px;letter-spacing:-0.12px;">yes</span>
<span class="t" style="left:1056.5px;top:196px;letter-spacing:-0.12px;">auto</span>
<span class="t" style="left:1.5px;top:211px;letter-spacing:-0.23px;">Nissan Versa Or simil...</span>
<span class="t" style="left:135.5px;top:211px;">5</span>
<span class="t" style="left:146.5px;top:211px;letter-spacing:-0.12px;">Compact - Inclusive - Plus Excess Ref...</span>
<span class="t" style="left:346.5px;top:211px;letter-spacing:-0.12px;">Flexible Car...</span>
<span class="t" style="left:421.5px;top:211px;letter-spacing:-0.51px;">Sat</span>
<span class="t" style="left:456.5px;top:211px;letter-spacing:0.1px;">07/04/2018</span>
<span class="t" style="left:526.5px;top:211px;letter-spacing:-0.13px;">08:00</span>
<span class="t" style="left:566.5px;top:211px;letter-spacing:-0.51px;">Sat</span>
<span class="t" style="left:601.5px;top:211px;letter-spacing:0.1px;">07/04/2018</span>
<span class="t" style="left:671.5px;top:211px;letter-spacing:-0.13px;">17:00</span>
<span class="t" style="left:725.5px;top:211px;">1</span>
<span class="t" style="left:736.5px;top:211px;letter-spacing:0.23px;">On Air...</span>
<span class="t" style="left:786.5px;top:211px;letter-spacing:0.23px;">On Air...</span>
<span class="t" style="left:859.5px;top:211px;letter-spacing:-0.13px;">36.70</span>
<span class="t" style="left:924.5px;top:211px;letter-spacing:-0.13px;">36.70</span>
<span class="t" style="left:956.5px;top:211px;letter-spacing:-0.12px;">Alamo</span>
<span class="t" style="left:1031.5px;top:211px;letter-spacing:-0.12px;">yes</span>
<span class="t" style="left:1056.5px;top:211px;letter-spacing:-0.12px;">auto</span>
<span class="t" style="left:1.5px;top:226px;letter-spacing:-0.23px;">Nissan Versa Or simil...</span>
<span class="t" style="left:135.5px;top:226px;">5</span>
<span class="t" style="left:146.5px;top:226px;letter-spacing:-0.12px;">Compact - Inclusive - Plus Excess Ref...</span>
<span class="t" style="left:346.5px;top:226px;letter-spacing:-0.12px;">Flexible Car...</span>
<span class="t" style="left:421.5px;top:226px;letter-spacing:-0.51px;">Sat</span>
<span class="t" style="left:456.5px;top:226px;letter-spacing:0.1px;">07/04/2018</span>
<span class="t" style="left:526.5px;top:226px;letter-spacing:-0.13px;">08:00</span>
<span class="t" style="left:566.5px;top:226px;letter-spacing:-0.51px;">Sat</span>
<span class="t" style="left:601.5px;top:226px;letter-spacing:0.1px;">07/04/2018</span>
<span class="t" style="left:671.5px;top:226px;letter-spacing:-0.13px;">17:00</span>
<span class="t" style="left:725.5px;top:226px;">1</span>
<span class="t" style="left:736.5px;top:226px;letter-spacing:0.23px;">On Air...</span>
<span class="t" style="left:786.5px;top:226px;letter-spacing:0.23px;">On Air...</span>
<span class="t" style="left:859.5px;top:226px;letter-spacing:-0.13px;">36.70</span>
<span class="t" style="left:924.5px;top:226px;letter-spacing:-0.13px;">36.70</span>
<span class="t" style="left:956.5px;top:226px;letter-spacing:-0.12px;">Alamo</span>
<span class="t" style="left:1031.5px;top:226px;letter-spacing:-0.12px;">yes</span>
<span class="t" style="left:1056.5px;top:226px;letter-spacing:-0.12px;">auto</span>
<span class="t" style="left:1.5px;top:241px;letter-spacing:0.03px;">Toyota Corolla Or si...</span>
<span class="t" style="left:135.5px;top:241px;">5</span>
<span class="t" style="left:146.5px;top:241px;letter-spacing:-0.12px;">Car(Intermediate) - Inclusive</span>
<span class="t" style="left:346.5px;top:241px;letter-spacing:-0.12px;">Flexible Car...</span>
<span class="t" style="left:421.5px;top:241px;letter-spacing:-0.51px;">Sat</span>
<span class="t" style="left:456.5px;top:241px;letter-spacing:0.1px;">07/04/2018</span>
<span class="t" style="left:526.5px;top:241px;letter-spacing:-0.13px;">08:00</span>
<span class="t" style="left:566.5px;top:241px;letter-spacing:-0.51px;">Sat</span>
<span class="t" style="left:601.5px;top:241px;letter-spacing:0.1px;">07/04/2018</span>
<span class="t" style="left:671.5px;top:241px;letter-spacing:-0.13px;">17:00</span>
<span class="t" style="left:725.5px;top:241px;">1</span>
<span class="t" style="left:736.5px;top:241px;letter-spacing:0.23px;">On Air...</span>
<span class="t" style="left:786.5px;top:241px;letter-spacing:0.23px;">On Air...</span>
<span class="t" style="left:859.5px;top:241px;letter-spacing:-0.13px;">36.72</span>
<span class="t" style="left:924.5px;top:241px;letter-spacing:-0.13px;">36.72</span>
<span class="t" style="left:956.5px;top:241px;letter-spacing:-0.12px;">Alamo</span>
<span class="t" style="left:1031.5px;top:241px;letter-spacing:-0.12px;">yes</span>
<span class="t" style="left:1056.5px;top:241px;letter-spacing:-0.12px;">auto</span>
<span class="t" style="left:1.5px;top:256px;letter-spacing:0.03px;">Toyota Corolla Or si...</span>
<span class="t" style="left:135.5px;top:256px;">5</span>
<span class="t" style="left:146.5px;top:256px;letter-spacing:-0.12px;">Intermediate - Inclusive</span>
<span class="t" style="left:346.5px;top:256px;letter-spacing:-0.12px;">Flexible Car...</span>
<span class="t" style="left:421.5px;top:256px;letter-spacing:-0.51px;">Sat</span>
<span class="t" style="left:456.5px;top:256px;letter-spacing:0.1px;">07/04/2018</span>
<span class="t" style="left:526.5px;top:256px;letter-spacing:-0.13px;">08:00</span>
<span class="t" style="left:566.5px;top:256px;letter-spacing:-0.51px;">Sat</span>
<span class="t" style="left:601.5px;top:256px;letter-spacing:0.1px;">07/04/2018</span>
<span class="t" style="left:671.5px;top:256px;letter-spacing:-0.13px;">17:00</span>
<span class="t" style="left:725.5px;top:256px;">1</span>
<span class="t" style="left:736.5px;top:256px;letter-spacing:0.23px;">On Air...</span>
<span class="t" style="left:786.5px;top:256px;letter-spacing:0.23px;">On Air...</span>
<span class="t" style="left:859.5px;top:256px;letter-spacing:-0.13px;">36.72</span>
<span class="t" style="left:924.5px;top:256px;letter-spacing:-0.13px;">36.72</span>
<span class="t" style="left:956.5px;top:256px;letter-spacing:-0.12px;">Alamo</span>
<span class="t" style="left:1031.5px;top:256px;letter-spacing:-0.12px;">yes</span>
<span class="t" style="left:1056.5px;top:256px;letter-spacing:-0.12px;">auto</span>
<span class="t" style="left:1.5px;top:271px;letter-spacing:0.03px;">Toyota Corolla Or si...</span>
<span class="t" style="left:135.5px;top:271px;">5</span>
<span class="t" style="left:146.5px;top:271px;letter-spacing:-0.12px;">Car(Intermediate) - Inclusive</span>
<span class="t" style="left:346.5px;top:271px;letter-spacing:-0.12px;">Flexible Car...</span>
<span class="t" style="left:421.5px;top:271px;letter-spacing:-0.51px;">Sat</span>
<span class="t" style="left:456.5px;top:271px;letter-spacing:0.1px;">07/04/2018</span>
<span class="t" style="left:526.5px;top:271px;letter-spacing:-0.13px;">08:00</span>
<span class="t" style="left:566.5px;top:271px;letter-spacing:-0.51px;">Sat</span>
<span class="t" style="left:601.5px;top:271px;letter-spacing:0.1px;">07/04/2018</span>
<span class="t" style="left:671.5px;top:271px;letter-spacing:-0.13px;">17:00</span>
<span class="t" style="left:725.5px;top:271px;">1</span>
<span class="t" style="left:736.5px;top:271px;letter-spacing:0.23px;">On Air...</span>
<span class="t" style="left:786.5px;top:271px;letter-spacing:0.23px;">On Air...</span>
<span class="t" style="left:859.5px;top:271px;letter-spacing:-0.13px;">36.72</span>
<span class="t" style="left:924.5px;top:271px;letter-spacing:-0.13px;">36.72</span>
<span class="t" style="left:956.5px;top:271px;letter-spacing:-0.12px;">Alamo</span>
<span class="t" style="left:1031.5px;top:271px;letter-spacing:-0.12px;">yes</span>
<span class="t" style="left:1056.5px;top:271px;letter-spacing:-0.12px;">auto</span>
<span class="t" style="left:1.5px;top:286px;letter-spacing:0.03px;">Toyota Corolla Or si...</span>
<span class="t" style="left:135.5px;top:286px;">5</span>
<span class="t" style="left:146.5px;top:286px;letter-spacing:-0.12px;">Intermediate - Inclusive</span>
<span class="t" style="left:346.5px;top:286px;letter-spacing:-0.12px;">Flexible Car...</span>
<span class="t" style="left:421.5px;top:286px;letter-spacing:-0.51px;">Sat</span>
<span class="t" style="left:456.5px;top:286px;letter-spacing:0.1px;">07/04/2018</span>
<span class="t" style="left:526.5px;top:286px;letter-spacing:-0.13px;">08:00</span>
<span class="t" style="left:566.5px;top:286px;letter-spacing:-0.51px;">Sat</span>
<span class="t" style="left:601.5px;top:286px;letter-spacing:0.1px;">07/04/2018</span>
<span class="t" style="left:671.5px;top:286px;letter-spacing:-0.13px;">17:00</span>
<span class="t" style="left:725.5px;top:286px;">1</span>
<span class="t" style="left:736.5px;top:286px;letter-spacing:0.23px;">On Air...</span>
<span class="t" style="left:786.5px;top:286px;letter-spacing:0.23px;">On Air...</span>
<span class="t" style="left:859.5px;top:286px;letter-spacing:-0.13px;">36.72</span>
<span class="t" style="left:924.5px;top:286px;letter-spacing:-0.13px;">36.72</span>
<span class="t" style="left:956.5px;top:286px;letter-spacing:-0.12px;">Alamo</span>
<span class="t" style="left:1031.5px;top:286px;letter-spacing:-0.12px;">yes</span>
<span class="t" style="left:1056.5px;top:286px;letter-spacing:-0.12px;">auto</span>
<span class="t" style="left:1.5px;top:301px;letter-spacing:0.03px;">Toyota Corolla Or si...</span>
<span class="t" style="left:135.5px;top:301px;">5</span>
<span class="t" style="left:146.5px;top:301px;letter-spacing:-0.12px;">Car(Intermediate) - Inclusive - Plus E...</span>
<span class="t" style="left:346.5px;top:301px;letter-spacing:-0.12px;">Flexible Car...</span>
<span class="t" style="left:421.5px;top:301px;letter-spacing:-0.51px;">Sat</span>
<span class="t" style="left:456.5px;top:301px;letter-spacing:0.1px;">07/04/2018</span>
<span class="t" style="left:526.5px;top:301px;letter-spacing:-0.13px;">08:00</span>
<span class="t" style="left:566.5px;top:301px;letter-spacing:-0.51px;">Sat</span>
<span class="t" style="left:601.5px;top:301px;letter-spacing:0.1px;">07/04/2018</span>
<span class="t" style="left:671.5px;top:301px;letter-spacing:-0.13px;">17:00</span>
<span class="t" style="left:725.5px;top:301px;">1</span>
<span class="t" style="left:736.5px;top:301px;letter-spacing:0.23px;">On Air...</span>
<span class="t" style="left:786.5px;top:301px;letter-spacing:0.23px;">On Air...</span>
<span class="t" style="left:859.5px;top:301px;letter-spacing:-0.13px;">39.39</span>
<span class="t" style="left:924.5px;top:301px;letter-spacing:-0.13px;">39.39</span>
<span class="t" style="left:956.5px;top:301px;letter-spacing:-0.12px;">Alamo</span>
<span class="t" style="left:1031.5px;top:301px;letter-spacing:-0.12px;">yes</span>
<span class="t" style="left:1056.5px;top:301px;letter-spacing:-0.12px;">auto</span>
<span class="t" style="left:1.5px;top:316px;letter-spacing:0.03px;">Toyota Corolla Or si...</span>
<span class="t" style="left:135.5px;top:316px;">5</span>
<span class="t" style="left:146.5px;top:316px;letter-spacing:-0.12px;">Intermediate - Inclusive - Plus Excess ...</span>
<span class="t" style="left:346.5px;top:316px;letter-spacing:-0.12px;">Flexible Car...</span>
<span class="t" style="left:421.5px;top:316px;letter-spacing:-0.51px;">Sat</span>
<span class="t" style="left:456.5px;top:316px;letter-spacing:0.1px;">07/04/2018</span>
<span class="t" style="left:526.5px;top:316px;letter-spacing:-0.13px;">08:00</span>
<span class="t" style="left:566.5px;top:316px;letter-spacing:-0.51px;">Sat</span>
<span class="t" style="left:601.5px;top:316px;letter-spacing:0.1px;">07/04/2018</span>
<span class="t" style="left:671.5px;top:316px;letter-spacing:-0.13px;">17:00</span>
<span class="t" style="left:725.5px;top:316px;">1</span>
<span class="t" style="left:736.5px;top:316px;letter-spacing:0.23px;">On Air...</span>
<span class="t" style="left:786.5px;top:316px;letter-spacing:0.23px;">On Air...</span>
<span class="t" style="left:859.5px;top:316px;letter-spacing:-0.13px;">39.39</span>
<span class="t" style="left:924.5px;top:316px;letter-spacing:-0.13px;">39.39</span>
<span class="t" style="left:956.5px;top:316px;letter-spacing:-0.12px;">Alamo</span>
<span class="t" style="left:1031.5px;top:316px;letter-spacing:-0.12px;">yes</span>
<span class="t" style="left:1056.5px;top:316px;letter-spacing:-0.12px;">auto</span>
<span class="t" style="left:1.5px;top:331px;letter-spacing:0.03px;">Toyota Corolla Or si...</span>
<span class="t" style="left:135.5px;top:331px;">5</span>
<span class="t" style="left:146.5px;top:331px;letter-spacing:-0.12px;">Car(Intermediate) - Inclusive - Plus E...</span>
<span class="t" style="left:346.5px;top:331px;letter-spacing:-0.12px;">Flexible Car...</span>
<span class="t" style="left:421.5px;top:331px;letter-spacing:-0.51px;">Sat</span>
<span class="t" style="left:456.5px;top:331px;letter-spacing:0.1px;">07/04/2018</span>
<span class="t" style="left:526.5px;top:331px;letter-spacing:-0.13px;">08:00</span>
<span class="t" style="left:566.5px;top:331px;letter-spacing:-0.51px;">Sat</span>
<span class="t" style="left:601.5px;top:331px;letter-spacing:0.1px;">07/04/2018</span>
<span class="t" style="left:671.5px;top:331px;letter-spacing:-0.13px;">17:00</span>
<span class="t" style="left:725.5px;top:331px;">1</span>
<span class="t" style="left:736.5px;top:331px;letter-spacing:0.23px;">On Air...</span>
<span class="t" style="left:786.5px;top:331px;letter-spacing:0.23px;">On Air...</span>
<span class="t" style="left:859.5px;top:331px;letter-spacing:-0.13px;">39.39</span>
<span class="t" style="left:924.5px;top:331px;letter-spacing:-0.13px;">39.39</span>
<span class="t" style="left:956.5px;top:331px;letter-spacing:-0.12px;">Alamo</span>
<span class="t" style="left:1031.5px;top:331px;letter-spacing:-0.12px;">yes</span>
<span class="t" style="left:1056.5px;top:331px;letter-spacing:-0.12px;">auto</span>
<span class="t" style="left:1.5px;top:346px;letter-spacing:0.03px;">Toyota Corolla Or si...</span>
<span class="t" style="left:135.5px;top:346px;">5</span>
<span class="t" style="left:146.5px;top:346px;letter-spacing:-0.12px;">Intermediate - Inclusive - Plus Excess ...</span>
<span class="t" style="left:346.5px;top:346px;letter-spacing:-0.12px;">Flexible Car...</span>
<span class="t" style="left:421.5px;top:346px;letter-spacing:-0.51px;">Sat</span>
<span class="t" style="left:456.5px;top:346px;letter-spacing:0.1px;">07/04/2018</span>
<span class="t" style="left:526.5px;top:346px;letter-spacing:-0.13px;">08:00</span>
<span class="t" style="left:566.5px;top:346px;letter-spacing:-0.51px;">Sat</span>
<span class="t" style="left:601.5px;top:346px;letter-spacing:0.1px;">07/04/2018</span>
<span class="t" style="left:671.5px;top:346px;letter-spacing:-0.13px;">17:00</span>
<span class="t" style="left:725.5px;top:346px;">1</span>
<span class="t" style="left:736.5px;top:346px;letter-spacing:0.23px;">On Air...</span>
<span class="t" style="left:786.5px;top:346px;letter-spacing:0.23px;">On Air...</span>
<span class="t" style="left:859.5px;top:346px;letter-spacing:-0.13px;">39.39</span>
<span class="t" style="left:924.5px;top:346px;letter-spacing:-0.13px;">39.39</span>
<span class="t" style="left:956.5px;top:346px;letter-spacing:-0.12px;">Alamo</span>
<span class="t" style="left:1031.5px;top:346px;letter-spacing:-0.12px;">yes</span>
<span class="t" style="left:1056.5px;top:346px;letter-spacing:-0.12px;">auto</span>
<span class="t" style="left:1.5px;top:361px;letter-spacing:-0.23px;">Nissan Versa Or simil...</span>
<span class="t" style="left:135.5px;top:361px;">5</span>
<span class="t" style="left:146.5px;top:361px;letter-spacing:-0.12px;">Car(Compact) - Gold</span>
<span class="t" style="left:346.5px;top:361px;letter-spacing:-0.12px;">Flexible Car...</span>
<span class="t" style="left:421.5px;top:361px;letter-spacing:-0.51px;">Sat</span>
<span class="t" style="left:456.5px;top:361px;letter-spacing:0.1px;">07/04/2018</span>
<span class="t" style="left:526.5px;top:361px;letter-spacing:-0.13px;">08:00</span>
<span class="t" style="left:566.5px;top:361px;letter-spacing:-0.51px;">Sat</span>
<span class="t" style="left:601.5px;top:361px;letter-spacing:0.1px;">07/04/2018</span>
<span class="t" style="left:671.5px;top:361px;letter-spacing:-0.13px;">17:00</span>
<span class="t" style="left:725.5px;top:361px;">1</span>
<span class="t" style="left:736.5px;top:361px;letter-spacing:0.23px;">On Air...</span>
<span class="t" style="left:786.5px;top:361px;letter-spacing:0.23px;">On Air...</span>
<span class="t" style="left:859.5px;top:361px;letter-spacing:-0.13px;">39.41</span>
<span class="t" style="left:924.5px;top:361px;letter-spacing:-0.13px;">39.41</span>
<span class="t" style="left:956.5px;top:361px;letter-spacing:-0.12px;">Alamo</span>
<span class="t" style="left:1031.5px;top:361px;letter-spacing:-0.12px;">yes</span>
<span class="t" style="left:1056.5px;top:361px;letter-spacing:-0.12px;">auto</span>
</div>
<div style="left:571px;top:420px;width:86px;height:17px;background:#FFFFE1;border:1px solid #000;box-sizing:border-box"></div>
<span class="t" style="left:573.5px;top:423px;letter-spacing:-0.28px;">Flexible Car Hire</span>
<div style="left:1573px;top:372px;width:16px;height:384px;background:conic-gradient(#fff 25%,#D6D3CE 0 50%,#fff 0 75%,#D6D3CE 0) 0 0/2px 2px"></div>
<div style="left:1573px;top:372px;width:16px;height:16px;background:#D6D3CE;box-shadow:inset -1px -1px #424142,inset 1px 1px #D6D3CE,inset -2px -2px #848284,inset 2px 2px #fff;"></div>
<div style="left:1573px;top:388px;width:16px;height:41px;background:#D6D3CE;box-shadow:inset -1px -1px #424142,inset 1px 1px #D6D3CE,inset -2px -2px #848284,inset 2px 2px #fff;"></div>
<div style="left:1573px;top:740px;width:16px;height:16px;background:#D6D3CE;box-shadow:inset -1px -1px #424142,inset 1px 1px #D6D3CE,inset -2px -2px #848284,inset 2px 2px #fff;"></div>
<svg style="left:1577px;top:378px" width="7" height="4" viewBox="0 0 7 4"><path d="M0 4h7L3.500 0z" fill="#000"/></svg>
<svg style="left:1577px;top:746px" width="7" height="4" viewBox="0 0 7 4"><path d="M0 0h7L3.500 4z" fill="#000"/></svg>
<span class="t" style="left:229px;top:783px;letter-spacing:0.03px;">First portion: 10.9 sec, total search time: 11.1 sec</span>
<div style="left:1560px;top:778px;width:23px;height:22px;background:#D6D3CE;box-shadow:inset -1px -1px #424142,inset 1px 1px #fff,inset -2px -2px #848284,inset 2px 2px #D6D3CE;"></div>
<span style="left:1568px;top:780px;font:bold 17px/20px 'Liberation Serif',serif;color:#0046ad">i</span>
<div style="left:222px;top:805px;width:1371px;height:1px;background:#848284;"></div>
<div style="left:274px;top:806px;width:1px;height:17px;background:#848284;"></div>
<div style="left:461px;top:806px;width:1px;height:17px;background:#848284;"></div>
<div style="left:315px;top:805px;width:51px;height:18px;background:#088A08;border-radius:0 0 3px 3px"></div>
<span class="t" style="left:225.5px;top:808px;letter-spacing:-0.51px;">Summary</span>
<span class="t" style="left:277.5px;top:808px;letter-spacing:-0.47px;">Search</span>
<span class="t" style="left:318.5px;top:808px;letter-spacing:-0.66px;color:#fff;">Car MCO</span>
<span class="t" style="left:369px;top:808px;letter-spacing:-0.38px;">Financial Summary</span>
<span class="t" style="left:793.5px;top:832px;letter-spacing:-0.18px;">User: 473 - Ollie Davies</span>
<span class="t" style="left:916px;top:832px;letter-spacing:-0.1px;">Retailer: 'Ocean-Florida'</span>
<span class="t" style="left:1042.5px;top:832px;letter-spacing:-0.07px;">Client: none</span>
<span class="t" style="left:1539.5px;top:832px;letter-spacing:-0.44px;">20:36 GMT</span>
<div style="left:0px;top:858px;width:1600px;height:1px;background:#848284;"></div>
<div style="left:0px;top:859px;width:1600px;height:1px;background:#424142;"></div>
<div style="left:2px;top:860px;width:52px;height:38px;background:#D6D3CE;box-shadow:inset -1px -1px #424142,inset 1px 1px #fff,inset -2px -2px #848284,inset 2px 2px #D6D3CE;"></div>
<svg style="left:4px;top:871px" width="16" height="15" viewBox="0 0 16 15"><path d="M2.500 1.800C4 .3 6.500 .2 8.300 1.500L7 6.500C5.200 5.300 3 5.300 1.200 6.700z" fill="#e8441c"/><path d="M3 2.500c1.300-.8 3-.8 4.300 0L6.500 5C5.300 4.500 4 4.500 2.500 5z" fill="#f8922a"/><path d="M9 2c1.800 1.200 4.500 1.200 6.500-.3L14 6.800c-1.800 1.300-4.500 1.400-6.300.2z" fill="#5aaa2a"/><path d="M9.500 3c1.500.7 3.500.6 5-.3l-.6 2c-1.300.8-3.300 1-4.800.3z" fill="#8cd04a"/><path d="M1 7.500C2.800 6.200 5 6.200 6.800 7.300l-1.400 5.200C3.600 11.300 1.300 11.500 0 12.700z" fill="#2c7cd0"/><path d="M1.800 8.200c1.300-.8 3-.8 4.200-.2l-.7 2.500c-1.200-.5-2.800-.4-4 .2z" fill="#a8d4f8"/><path d="M7.500 7.800c1.800 1.200 4.300 1.200 6.200-.2l-1.400 5.200c-1.800 1.400-4.300 1.500-6.100.2z" fill="#ffc41a"/><path d="M8 9c1.500.7 3.200.6 4.700-.2l-.6 2c-1.300.8-3 1-4.500.3z" fill="#ffe45a"/></svg>
<span class="b" style="left:21px;top:873px;letter-spacing:-0.04px;">Start</span>
<div style="left:63px;top:860px;width:159px;height:38px;background:#fff;box-shadow:inset 1px 1px #424142,inset -1px -1px #fff,inset 2px 2px #848284"></div>
<svg style="left:69px;top:869px" width="28" height="20" viewBox="0 0 28 20"><defs><radialGradient id="hg3" cx=".3" cy=".25" r=".85"><stop offset="0" stop-color="#fff06a"/><stop offset=".25" stop-color="#fdb81e"/><stop offset=".55" stop-color="#e0700c"/><stop offset=".85" stop-color="#b43c0c"/></radialGradient></defs><path d="M0 7C.5 3 3 .3 6.500 0c3.500 0 8 2 12 3 4 1 7.500 1.200 9.500 2.200-1.500 3.500-5 7.500-9 11.500-1.300 1.500-2.500 3.300-4 3.300s-3-1.500-4.500-3C7 13.500 1 11 0 7z" fill="url(#hg3)"/></svg>
<span class="b" style="left:103px;top:873px;letter-spacing:0.01px;">Interactive - Ocea...</span>
<div style="left:223px;top:860px;width:160px;height:38px;background:#D6D3CE;box-shadow:inset -1px -1px #424142,inset 1px 1px #fff,inset -2px -2px #848284,inset 2px 2px #D6D3CE;"></div>
<div style="left:227px;top:863px;width:32px;height:32px;background:#fff;"></div>
<svg style="left:229px;top:869px" width="28" height="20" viewBox="0 0 28 20"><defs><radialGradient id="hg4" cx=".3" cy=".25" r=".85"><stop offset="0" stop-color="#fff06a"/><stop offset=".25" stop-color="#fdb81e"/><stop offset=".55" stop-color="#e0700c"/><stop offset=".85" stop-color="#b43c0c"/></radialGradient></defs><path d="M0 7C.5 3 3 .3 6.500 0c3.500 0 8 2 12 3 4 1 7.500 1.200 9.500 2.200-1.500 3.500-5 7.500-9 11.500-1.300 1.500-2.500 3.300-4 3.300s-3-1.500-4.500-3C7 13.500 1 11 0 7z" fill="url(#hg4)"/></svg>
<span class="t" style="left:262.5px;top:873px;letter-spacing:0.23px;">Interactive [2] - Oce...</span>
<div style="left:1408px;top:860px;width:190px;height:37px;background:#D6D3CE;box-shadow:inset 1px 1px #848284,inset -1px -1px #fff"></div>
<svg style="left:1415px;top:871px" width="16" height="16" viewBox="0 0 16 16"><path d="M1 .5l1 1 1-1 1 1 1-1 1 1 1-1 .8 7.500-7 .5z" fill="#f8a02a"/><path d="M1 3l3-2 3 .5.500 6.500-6.500.5z" fill="#f0701c"/><path d="M2 1l3 2 2.500 5H1z" fill="#fcc43a" fill-opacity=".6"/><path d="M7.500 1.500l8-.5.5 1-.5 1 .5 1-.5 1 .5 1-.5 1L8.500 8z" fill="#1c8cd4"/><path d="M8 2l7-.3-2 4L8.500 8z" fill="#0a6cb4" fill-opacity=".6"/><path d="M0 8l8.500 0 1 8-1-1-1 1-1-1-1 1-1-1-1 1-1-1-1 1-1-1 .5-1-.5-1 .5-1-.5-1z" fill="#3aa04a"/><path d="M0 8h8l.5 4-8 .5z" fill="#5ab83a" fill-opacity=".7"/><path d="M8.500 8l7-1-.5 1 .5 1-.5 1 .5 1-.5 1 .5 1-.5 1 .5 1-1-.5-1 .5-1-.5-1 .5-1-.5-1 .5z" fill="#e0281c"/><path d="M12 7.500l3.500-.5-1 5-2.500 3z" fill="#f88a1c" fill-opacity=".8"/></svg>
<svg style="left:1438px;top:873px" width="17" height="11" viewBox="0 0 17 11"><rect x=".5" y="1.500" width="13" height="6.500" rx=".8" fill="#6ad84a" stroke="#0a8a1a" stroke-width="1"/><path d="M1.500 2.500h8l-3 4.500h-5z" fill="#a8f07a" fill-opacity=".8"/><rect x="10.500" y="2.500" width="2" height="2" fill="#000"/><path d="M4.500 8v2M6.500 8v2M8.500 8v2M10.500 8v2" stroke="#e8d800" stroke-width="1.200"/><path d="M14.500 .5v10M14 1h2.500M14 4.500h2M14 7.500h2" stroke="#000" stroke-width="1.200"/></svg>
<svg style="left:1463px;top:870px" width="17" height="17" viewBox="0 0 17 17"><rect x="5.500" y="3.500" width="11" height="10" fill="#b4b4b8" stroke="#fff" stroke-width="1.400"/><rect x="5" y="3" width="12" height="11" fill="none" stroke="#8a8a8a" stroke-width=".6"/><path d="M6.500 14.500h9v1.800h-9z" fill="#fff" stroke="#8a8a8a" stroke-width=".6"/><path d="M1.500 1v5.500h4.500V1M3.800 1.500v4M3.800 6.500v10" stroke="#5a5a5a" stroke-width="2.400" fill="none"/><path d="M1.500 1v5.500h4.500V1M3.800 1.500v4M3.800 6.500v10" stroke="#fff" stroke-width="1.200" fill="none"/></svg>
<svg style="left:1487px;top:871px" width="17" height="17" viewBox="0 0 17 17"><path d="M.8 5.500h2.500L7.500 1v14L3.300 10.800H.8z" fill="#fff" stroke="#8a8a8a" stroke-width=".9"/><circle cx="12" cy="11.500" r="4.600" fill="#e0201c"/><circle cx="12" cy="11.500" r="4.600" fill="none" stroke="#f8787c" stroke-width=".6"/><path d="M9.800 9.300l4.400 4.400M14.200 9.300l-4.400 4.400" stroke="#fff" stroke-width="1.700"/></svg>
<svg style="left:1581px;top:873px" width="15" height="13" viewBox="0 0 15 13"><rect x="0" y="0" width="15" height="13" fill="#7aa8e0"/><rect x="1" y="1" width="13" height="9" fill="#1c54b4"/><path d="M1 1h13v3L1 8z" fill="#2c6ccc"/><rect x="1" y="10" width="13" height="2.500" fill="#0a1430"/><rect x="1.500" y="9.500" width="3" height="2.500" fill="#e8c43c"/><rect x="2" y="10" width="1.500" height="1.500" fill="#4c9cf0"/></svg>
<span class="t" style="left:1531px;top:865px;letter-spacing:-0.12px;">20:36</span>
<span class="t" style="left:1516.5px;top:881px;letter-spacing:0.05px;">16/05/2017</span>
</div></body></html>
